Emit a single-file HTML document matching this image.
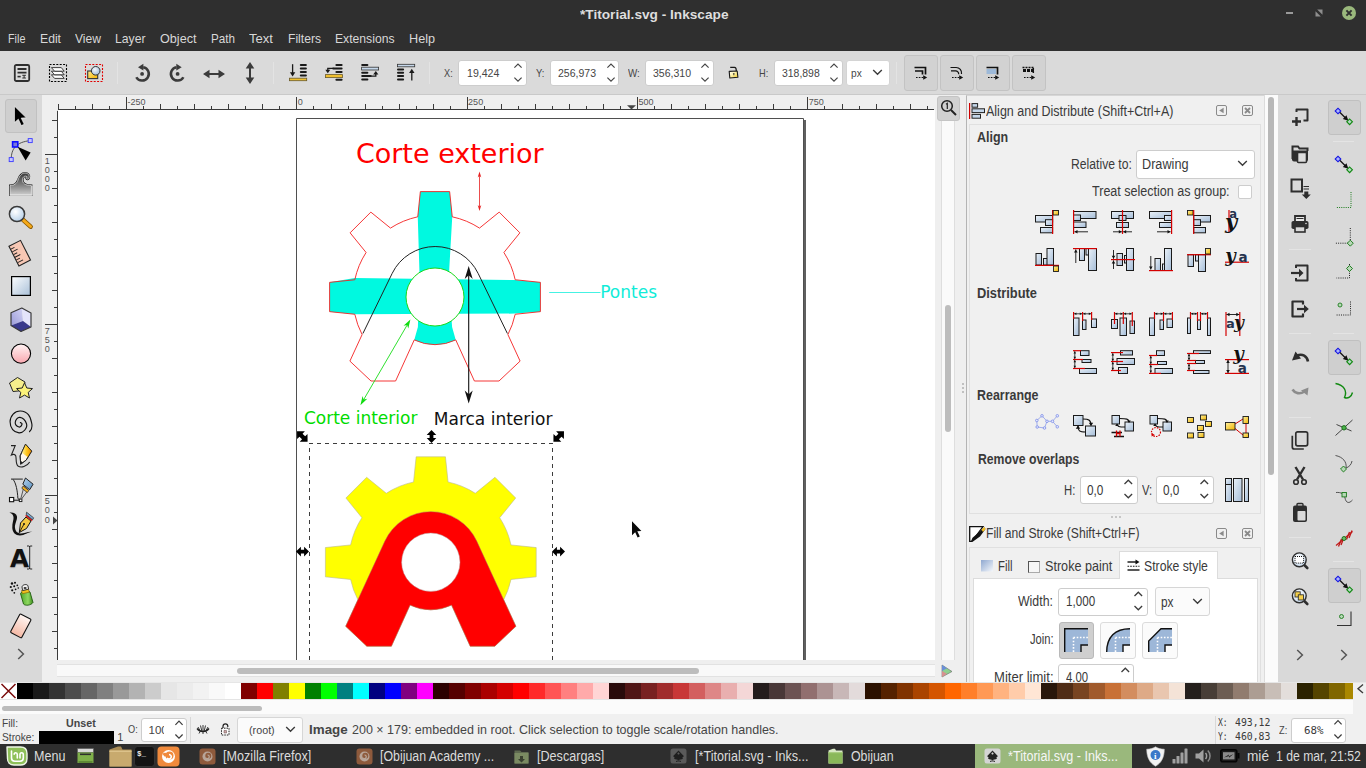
<!DOCTYPE html>
<html><head><meta charset="utf-8"><title>*Titorial.svg - Inkscape</title>
<style>
html,body{margin:0;padding:0;}
body{width:1366px;height:768px;overflow:hidden;position:relative;background:#d9d9d9;font-family:"Liberation Sans",sans-serif;}
body div,body svg,.t{position:absolute;box-sizing:border-box;}
.t{white-space:nowrap;display:block;}
svg{overflow:visible;}
</style></head><body>
<div style="left:0px;top:0px;width:1366px;height:51px;background:#2f2f2f;"></div>
<span class="t" style="left:580.0px;top:7px;font-size:13px;line-height:15px;color:#dedede;font-weight:bold;transform:scaleX(1.0504);transform-origin:0 0;">*Titorial.svg - Inkscape</span>
<div style="left:1286px;top:12px;width:7px;height:2px;background:#9a9a9a;"></div>
<svg style="left:1314px;top:8px;" width="10" height="10" viewBox="0 0 10 10"><path d="M3.2 1.5H8.5V6.8Z M1.5 3.2V8.5H6.8Z" fill="#8e8e8e"/></svg>
<div style="left:1342px;top:6px;width:14px;height:14px;background:#9ab87c;border-radius:7px;"></div>
<svg style="left:1342px;top:6px;" width="14" height="14" viewBox="0 0 14 14"><path d="M4.4 4.4L9.6 9.6M9.6 4.4L4.4 9.6" stroke="#2f2f2f" stroke-width="2"/></svg>
<span class="t" style="left:8.0px;top:31px;font-size:13.5px;line-height:15px;color:#d8d8d8;transform:scaleX(0.8000);transform-origin:0 0;">File</span>
<span class="t" style="left:40.0px;top:31px;font-size:13.5px;line-height:15px;color:#d8d8d8;transform:scaleX(0.9026);transform-origin:0 0;">Edit</span>
<span class="t" style="left:75.0px;top:31px;font-size:13.5px;line-height:15px;color:#d8d8d8;transform:scaleX(0.8946);transform-origin:0 0;">View</span>
<span class="t" style="left:115.0px;top:31px;font-size:13.5px;line-height:15px;color:#d8d8d8;transform:scaleX(0.9033);transform-origin:0 0;">Layer</span>
<span class="t" style="left:160.0px;top:31px;font-size:13.5px;line-height:15px;color:#d8d8d8;transform:scaleX(0.9355);transform-origin:0 0;">Object</span>
<span class="t" style="left:210.5px;top:31px;font-size:13.5px;line-height:15px;color:#d8d8d8;transform:scaleX(0.8644);transform-origin:0 0;">Path</span>
<span class="t" style="left:249.0px;top:31px;font-size:13.5px;line-height:15px;color:#d8d8d8;transform:scaleX(0.9691);transform-origin:0 0;">Text</span>
<span class="t" style="left:287.5px;top:31px;font-size:13.5px;line-height:15px;color:#d8d8d8;transform:scaleX(0.8980);transform-origin:0 0;">Filters</span>
<span class="t" style="left:335.0px;top:31px;font-size:13.5px;line-height:15px;color:#d8d8d8;transform:scaleX(0.9011);transform-origin:0 0;">Extensions</span>
<span class="t" style="left:409.0px;top:31px;font-size:13.5px;line-height:15px;color:#d8d8d8;transform:scaleX(0.9364);transform-origin:0 0;">Help</span>
<div style="left:0px;top:51px;width:1366px;height:44px;background:#dadada;"></div>
<div style="left:0px;top:94px;width:1366px;height:1px;background:#c9c9c9;"></div>
<svg style="left:13px;top:64px;" width="18" height="18" viewBox="0 0 18 18"><rect x="1.8" y="1" width="14.4" height="16" rx="1.5" fill="none" stroke="#2e2e2e" stroke-width="1.8"/><path d="M4.5 5h9M4.5 8.6h9" stroke="#2e2e2e" stroke-width="1.8"/><path d="M4.5 12.6h3.2" stroke="#2e2e2e" stroke-width="1.6"/><path d="M9.3 11.3h3.6M9.3 14h3.6M11.1 11.3v2.7" stroke="#2e2e2e" stroke-width="1"/></svg>
<svg style="left:49px;top:64px;" width="18" height="18" viewBox="0 0 18 18"><rect x=".5" y=".5" width="17" height="17" fill="none" stroke="#000" stroke-width="1.100" stroke-dasharray="2 1.400"/><path d="M2.400 10.8H12.300L15.200 14.4H5.600Z" fill="#fff" stroke="#2a2a2a" stroke-width=".9" stroke-linejoin="round"/><path d="M2.400 7.2H12.300L15.200 10.8H5.600Z" fill="#fff" stroke="#2a2a2a" stroke-width=".9" stroke-linejoin="round"/><path d="M2.400 3.6H12.300L15.200 7.2H5.600Z" fill="#fff" stroke="#2a2a2a" stroke-width=".9" stroke-linejoin="round"/></svg>
<svg style="left:85px;top:64px;" width="18" height="18" viewBox="0 0 18 18"><defs><linearGradient id="gFo" x1="0" y1="0" x2="1" y2="1"><stop offset="0" stop-color="#ffe88a"/><stop offset="1" stop-color="#f5b400"/></linearGradient><radialGradient id="gBall" cx=".4" cy=".35" r=".7"><stop offset="0" stop-color="#f4f8fc"/><stop offset="1" stop-color="#9db9d8"/></radialGradient></defs><rect x=".5" y=".5" width="17" height="17" fill="none" stroke="#e00000" stroke-width="1.100" stroke-dasharray="2 1.400"/><rect x="2.700" y="7" width="10" height="7.600" fill="url(#gFo)" stroke="#333" stroke-width="1.100"/><circle cx="10.700" cy="6.800" r="4.300" fill="url(#gBall)" stroke="#333" stroke-width="1"/></svg>
<div style="left:117px;top:62px;width:1px;height:22px;background:#e3e3e3;"></div>
<svg style="left:134px;top:63px;" width="18" height="20" viewBox="0 0 18 20"><path d="M9.200 4.300A6.700 6.700 0 1 1 2.300 14.250" fill="none" stroke="#3b3b3b" stroke-width="2.500"/><path d="M4 4.300L9.400 .7V7.600Z" fill="#3b3b3b"/><circle cx="8.100" cy="10.900" r="1.900" fill="#3b3b3b"/></svg>
<svg style="left:168px;top:63px;" width="18" height="20" viewBox="0 0 18 20"><path d="M8.5 4.300A6.700 6.700 0 1 0 15.4 14.250" fill="none" stroke="#3b3b3b" stroke-width="2.500"/><path d="M13.7 4.300L8.3 .7V7.600Z" fill="#3b3b3b"/><circle cx="9.6" cy="10.900" r="1.900" fill="#3b3b3b"/></svg>
<svg style="left:203px;top:68px;" width="22" height="12" viewBox="0 0 22 12"><path d="M0 6L6.500 1.700V5H15.500V1.700L22 6 15.500 10.300V7H6.500V10.300Z" fill="#3b3b3b"/></svg>
<svg style="left:245px;top:62px;" width="10" height="22" viewBox="0 0 10 22"><path d="M5 0L9.300 6.500H6V15.500H9.300L5 22 .7 15.500H4V6.500H.7Z" fill="#3b3b3b"/></svg>
<div style="left:273px;top:62px;width:1px;height:22px;background:#e3e3e3;"></div>
<svg style="left:289px;top:64px;" width="18" height="18" viewBox="0 0 18 18"><path d="M11.8 0.9H16.9" stroke="#1a1a1a" stroke-width="2" stroke-linecap="round"/><path d="M11.8 4.4H16.9" stroke="#1a1a1a" stroke-width="2" stroke-linecap="round"/><path d="M11.8 8H16.9" stroke="#1a1a1a" stroke-width="2" stroke-linecap="round"/><path d="M11.8 11.6H16.9" stroke="#1a1a1a" stroke-width="2" stroke-linecap="round"/><path d="M3.600 .2V9" stroke="#1a1a1a" stroke-width="1.300"/><path d="M.9 8.300H6.300L3.600 12.500Z" fill="#1a1a1a"/><rect x=".5" y="14.200" width="17.200" height="2.500" fill="#f0c030" stroke="#6a5a2a" stroke-width=".8"/></svg>
<svg style="left:325px;top:64px;" width="18" height="18" viewBox="0 0 18 18"><path d="M11.4 0.9H16.6" stroke="#1a1a1a" stroke-width="2" stroke-linecap="round"/><path d="M8.2 4.4H16.6" stroke="#1a1a1a" stroke-width="2" stroke-linecap="round"/><path d="M11.4 8H16.6" stroke="#1a1a1a" stroke-width="2" stroke-linecap="round"/><path d="M11.4 15.7H16.6" stroke="#1a1a1a" stroke-width="2" stroke-linecap="round"/><path d="M8.500 4.400H2.800V6.500" stroke="#1a1a1a" stroke-width="1.300" fill="none"/><path d="M.3 5.800H5.300L2.800 9.200Z" fill="#1a1a1a"/><rect x=".5" y="10.600" width="17" height="3" fill="#f0c030" stroke="#6a5a2a" stroke-width=".8"/></svg>
<svg style="left:361px;top:64px;" width="18" height="18" viewBox="0 0 18 18"><path d="M1.2 0.9H6.4" stroke="#1a1a1a" stroke-width="2" stroke-linecap="round"/><path d="M1.2 8.7H6.4" stroke="#1a1a1a" stroke-width="2" stroke-linecap="round"/><path d="M1.2 12.1H9.7" stroke="#1a1a1a" stroke-width="2" stroke-linecap="round"/><path d="M1.2 15.5H6.4" stroke="#1a1a1a" stroke-width="2" stroke-linecap="round"/><rect x=".6" y="3.200" width="17" height="2.800" fill="#c5d7ea" stroke="#333" stroke-width=".8"/><path d="M9.500 12.100H14.800V10" stroke="#1a1a1a" stroke-width="1.300" fill="none"/><path d="M12.200 10.500H17.400L14.800 7Z" fill="#1a1a1a"/></svg>
<svg style="left:397px;top:64px;" width="18" height="18" viewBox="0 0 18 18"><path d="M1 5.5H6.1" stroke="#1a1a1a" stroke-width="2" stroke-linecap="round"/><path d="M1 8.8H6.1" stroke="#1a1a1a" stroke-width="2" stroke-linecap="round"/><path d="M1 12.1H6.1" stroke="#1a1a1a" stroke-width="2" stroke-linecap="round"/><path d="M1 15.5H6.1" stroke="#1a1a1a" stroke-width="2" stroke-linecap="round"/><rect x=".4" y=".3" width="17.300" height="2.500" fill="#c5d7ea" stroke="#333" stroke-width=".8"/><path d="M14.800 16.600V8" stroke="#1a1a1a" stroke-width="1.300"/><path d="M12.100 9H17.500L14.800 4.800Z" fill="#1a1a1a"/></svg>
<div style="left:429px;top:62px;width:1px;height:22px;background:#e3e3e3;"></div>
<span class="t" style="left:444.0px;top:67px;font-size:11.5px;line-height:12px;color:#454545;transform:scaleX(0.8000);transform-origin:0 0;">X:</span>
<div style="left:458px;top:60px;width:68.5px;height:26px;background:#ffffff;border:1px solid #cdcdcd;border-radius:3px;"></div>
<span class="t" style="left:466.6px;top:67px;font-size:11.5px;line-height:12px;color:#454545;transform:scaleX(0.9212);transform-origin:0 0;">19,424</span>
<svg style="left:513.0px;top:62px;" width="10" height="22" viewBox="0 0 10 22"><path d="M1.400 5.700L5 2.100 8.600 5.700M1.400 15.600L5 19.200 8.600 15.600" fill="none" stroke="#444" stroke-width="1.150"/></svg>
<span class="t" style="left:536.0px;top:67px;font-size:11.5px;line-height:12px;color:#454545;transform:scaleX(0.8208);transform-origin:0 0;">Y:</span>
<div style="left:550px;top:60px;width:69px;height:26px;background:#ffffff;border:1px solid #cdcdcd;border-radius:3px;"></div>
<span class="t" style="left:558.2px;top:67px;font-size:11.5px;line-height:12px;color:#454545;transform:scaleX(0.9143);transform-origin:0 0;">256,973</span>
<svg style="left:605.5px;top:62px;" width="10" height="22" viewBox="0 0 10 22"><path d="M1.400 5.700L5 2.100 8.600 5.700M1.400 15.600L5 19.200 8.600 15.600" fill="none" stroke="#444" stroke-width="1.150"/></svg>
<span class="t" style="left:627.7px;top:67px;font-size:11.5px;line-height:12px;color:#454545;transform:scaleX(0.8524);transform-origin:0 0;">W:</span>
<div style="left:645px;top:60px;width:68.5px;height:26px;background:#ffffff;border:1px solid #cdcdcd;border-radius:3px;"></div>
<span class="t" style="left:653.0px;top:67px;font-size:11.5px;line-height:12px;color:#454545;transform:scaleX(0.9143);transform-origin:0 0;">356,310</span>
<svg style="left:700.0px;top:62px;" width="10" height="22" viewBox="0 0 10 22"><path d="M1.400 5.700L5 2.100 8.600 5.700M1.400 15.600L5 19.200 8.600 15.600" fill="none" stroke="#444" stroke-width="1.150"/></svg>
<span class="t" style="left:759.2px;top:67px;font-size:11.5px;line-height:12px;color:#454545;transform:scaleX(0.8000);transform-origin:0 0;">H:</span>
<div style="left:774px;top:60px;width:68.5px;height:26px;background:#ffffff;border:1px solid #cdcdcd;border-radius:3px;"></div>
<span class="t" style="left:782.3px;top:67px;font-size:11.5px;line-height:12px;color:#454545;transform:scaleX(0.9071);transform-origin:0 0;">318,898</span>
<svg style="left:829.0px;top:62px;" width="10" height="22" viewBox="0 0 10 22"><path d="M1.400 5.700L5 2.100 8.600 5.700M1.400 15.600L5 19.200 8.600 15.600" fill="none" stroke="#444" stroke-width="1.150"/></svg>
<svg style="left:727px;top:65px;" width="13" height="14" viewBox="0 0 13 14"><defs><linearGradient id="gLk" x1="0" y1="0" x2="1" y2="1"><stop offset="0" stop-color="#ffffff"/><stop offset=".5" stop-color="#fdf0a0"/><stop offset="1" stop-color="#e8c020"/></linearGradient></defs><path d="M3.200 2.400H7.600C9 2.400 9.300 3.600 9.300 6" fill="none" stroke="#1a1a1a" stroke-width="1.200"/><path d="M2.200 6.400L10.200 6 10.900 12.300 2.800 13Z" fill="url(#gLk)" stroke="#1a1a1a" stroke-width="1.100" stroke-linejoin="round"/><path d="M5.800 8.200h1.800l-.6 2.600z" fill="#222"/></svg>
<div style="left:846px;top:60px;width:43.5px;height:26px;background:#ffffff;border:1px solid #d4d4d4;border-radius:3px;"></div>
<span class="t" style="left:851.3px;top:67px;font-size:11.5px;line-height:12px;color:#454545;transform:scaleX(0.8813);transform-origin:0 0;">px</span>
<svg style="left:872px;top:68px;" width="11" height="9" viewBox="0 0 11 9"><path d="M1.2 2L5.5 6.3 9.8 2" fill="none" stroke="#3c3c3c" stroke-width="1.4"/></svg>
<div style="left:896px;top:62px;width:1px;height:22px;background:#e3e3e3;"></div>
<div style="left:904px;top:55px;width:34px;height:35.5px;background:#d2d2d2;border:1px solid #c3c3c3;border-radius:3px;"></div>
<svg style="left:914px;top:66px;" width="14" height="15" viewBox="0 0 14 15"><path d="M0.5 1.5h11v7M1 5h7.5v3.5" fill="none" stroke="#111" stroke-width="1.7"/><path d="M2 11.5h8" stroke="#111" stroke-width="1.2" stroke-dasharray="1.6 1.2" fill="none"/><path d="M9.2 9.2l4 2.3-4 2.3z" fill="#111"/></svg>
<div style="left:940px;top:55px;width:34px;height:35.5px;background:#d2d2d2;border:1px solid #c3c3c3;border-radius:3px;"></div>
<svg style="left:950px;top:66px;" width="14" height="15" viewBox="0 0 14 15"><path d="M0.5 1.5h5.5a5.5 5.5 0 0 1 5.5 6.5M1 4.8h4.5a3.2 3.2 0 0 1 3.2 3.5" fill="none" stroke="#111" stroke-width="1.2"/><path d="M2 11.5h8" stroke="#111" stroke-width="1.2" stroke-dasharray="1.6 1.2" fill="none"/><path d="M9.2 9.2l4 2.3-4 2.3z" fill="#111"/></svg>
<div style="left:976px;top:55px;width:34px;height:35.5px;background:#d2d2d2;border:1px solid #c3c3c3;border-radius:3px;"></div>
<svg style="left:986px;top:66px;" width="14" height="15" viewBox="0 0 14 15"><rect x="0.5" y="3" width="9.5" height="5" fill="#9db9d8"/><path d="M0.5 1.5h11v7" fill="none" stroke="#111" stroke-width="1.7"/><path d="M2 11.5h8" stroke="#111" stroke-width="1.2" stroke-dasharray="1.6 1.2" fill="none"/><path d="M9.2 9.2l4 2.3-4 2.3z" fill="#111"/></svg>
<div style="left:1012px;top:55px;width:34px;height:35.5px;background:#d2d2d2;border:1px solid #c3c3c3;border-radius:3px;"></div>
<svg style="left:1022px;top:66px;" width="14" height="15" viewBox="0 0 14 15"><path d="M0.5 1.5h11" stroke="#111" stroke-width="1.5" stroke-dasharray="2 1"/><path d="M1 3h3v3h-3zM5 3h3v3h-3zM9 3h3v3h-3z" fill="#111"/><path d="M11.3 2v6" stroke="#111" stroke-width="1.5" stroke-dasharray="2 1"/><path d="M2 11.5h8" stroke="#111" stroke-width="1.2" stroke-dasharray="1.6 1.2" fill="none"/><path d="M9.2 9.2l4 2.3-4 2.3z" fill="#111"/></svg>
<div style="left:0px;top:95px;width:42px;height:587px;background:#d9d9d9;"></div>
<div style="left:5px;top:99px;width:32px;height:34px;background:#cfcfcf;border:1px solid #c1c1c1;border-radius:3px;"></div>
<svg width="0" height="0" style="left:0;top:0"><defs>
<linearGradient id="gRect" x1="0" y1="0" x2="1" y2="1"><stop offset="0" stop-color="#fdfeff"/><stop offset="1" stop-color="#a9c0d8"/></linearGradient>
<linearGradient id="gPink" x1="0" y1="0" x2="0" y2="1"><stop offset="0" stop-color="#fff4f4"/><stop offset="1" stop-color="#f9a8b0"/></linearGradient>
<linearGradient id="gEra" x1="0" y1="0" x2="0" y2="1"><stop offset="0" stop-color="#fff6f2"/><stop offset="1" stop-color="#f4b8a4"/></linearGradient>
<linearGradient id="gWave" x1="0" y1="0" x2="0" y2="1"><stop offset="0" stop-color="#2a2a2a"/><stop offset=".55" stop-color="#6a6a6a"/><stop offset="1" stop-color="#c4c4c4"/></linearGradient>
<radialGradient id="gLens" cx=".4" cy=".35" r=".7"><stop offset="0" stop-color="#ffffff"/><stop offset="1" stop-color="#b5cfe8"/></radialGradient>
<linearGradient id="gCan" x1="0" y1="0" x2="1" y2="0"><stop offset="0" stop-color="#4ea82a"/><stop offset=".6" stop-color="#8fd860"/><stop offset="1" stop-color="#3c8a1e"/></linearGradient>
</defs></svg>
<svg style="left:13px;top:105px;" width="15" height="22" viewBox="0 0 15 22"><path d="M1.5 1.2V17.6L5.3 14.2 8.3 20.6 11.2 19.3 8.2 13.1 13.3 12.8z" fill="#000" stroke="#fff" stroke-width=".6"/></svg>
<svg style="left:8px;top:137px;" width="26" height="26" viewBox="0 0 26 26"><path d="M3.2 22.5C3.2 12 8 5 22.5 3.6" fill="none" stroke="#444" stroke-width=".9"/><rect x="4.600" y="4.800" width="5.200" height="5.200" fill="#7878d8" stroke="#1010ff" stroke-width="1.600"/><rect x="20.2" y="1.6" width="4" height="4" fill="#c8c8ff" stroke="#3a3aff" stroke-width=".9"/><rect x="1.2" y="20.6" width="4" height="4" fill="#c8c8ff" stroke="#3a3aff" stroke-width=".9"/><path d="M9.6 9.8L22.6 15.6 17.6 23.6z" fill="#000"/></svg>
<svg style="left:9px;top:171px;" width="24" height="25" viewBox="0 0 24 25"><defs><linearGradient id="gWv" x1="0" y1="0" x2="0" y2="1"><stop offset="0" stop-color="#3a3a3a"/><stop offset=".5" stop-color="#7a7a7a"/><stop offset="1" stop-color="#cdcdcd"/></linearGradient></defs><path d="M1.100 24V14.500C5 14.500 7.500 13 9 9 10.500 4.500 13 2 16 2 19 2 21 4.500 20 7 19.500 8.300 17.800 8.600 17.200 7.400 16.800 6.300 17.800 5.300 18.300 6 16.500 4.200 13.800 5.500 13.500 8.500 13.200 12 16 14.500 22.400 14.500V24Z" fill="url(#gWv)" stroke="#111" stroke-width="2"/><path d="M1.100 24V14.500C5 14.500 7.500 13 9 9 10.500 4.500 13 2 16 2 19 2 21 4.500 20 7 19.500 8.300 17.800 8.600 17.200 7.400 16.800 6.300 17.800 5.300 18.300 6 16.500 4.200 13.800 5.500 13.500 8.500 13.200 12 16 14.500 22.400 14.500V24Z" fill="url(#gWv)" stroke="#f4f4f4" stroke-width=".7"/><path d="M.6 24.300H23V14.800" fill="none" stroke="#f0f0f0" stroke-width=".9"/></svg>
<svg style="left:7px;top:204px;" width="27" height="27" viewBox="0 0 27 27"><path d="M15.8 15.6L23.600 22.600" stroke="#8a5a00" stroke-width="4.600" stroke-linecap="round"/><path d="M16 15.800L23.500 22.500" stroke="#f5a91a" stroke-width="3" stroke-linecap="round"/><circle cx="10" cy="10" r="7.600" fill="url(#gLens)" stroke="#3a3a3a" stroke-width="1.500"/></svg>
<svg style="left:7px;top:239px;" width="26" height="26" viewBox="0 0 26 26"><g transform="rotate(-27 13 14)"><rect x="6.2" y="3" width="13" height="22" fill="#f7c7b4" stroke="#222" stroke-width="1.100"/><path d="M6.600 6.500h4M6.600 9.500h6M6.600 12.500h4M6.600 15.500h6M6.600 18.500h4M6.600 21.500h6" stroke="#222" stroke-width=".9"/></g></svg>
<svg style="left:11px;top:276px;" width="20" height="20" viewBox="0 0 20 20"><rect x=".6" y=".6" width="18.800" height="18.800" fill="url(#gRect)" stroke="#000" stroke-width="1.200"/></svg>
<svg style="left:0px;top:0px;" width="42" height="340" viewBox="0 0 42 340"><defs><linearGradient id="gBoxL" x1="0" y1="1" x2="1" y2="0"><stop offset="0" stop-color="#9a9ad8"/><stop offset="1" stop-color="#d4d4f4"/></linearGradient></defs><path d="M11 312.700L21.800 308 23 321 11 325.400z" fill="url(#gBoxL)"/><path d="M21.800 308L31 313V327L23 321z" fill="#e4e4fb"/><path d="M11 325.400L23 321 31 327 21 331.500z" fill="#38388c"/><path d="M21.800 308L31 313V327L21 331.500 11 325.400V312.700z" fill="none" stroke="#3a3a3a" stroke-width="1.200" stroke-linejoin="round"/></svg>
<svg style="left:10px;top:343px;" width="22" height="22" viewBox="0 0 22 22"><circle cx="11" cy="10.600" r="9.600" fill="url(#gPink)" stroke="#000" stroke-width="1.100"/></svg>
<svg style="left:8px;top:376px;" width="26" height="24" viewBox="0 0 26 24"><path d="M9.500 1.500L17 6 15 14.500 5 15.500 1.500 7z" fill="#f6ee8c" stroke="#222" stroke-width="1"/><path d="M16.500 6.800l2.300 5.200 5.700.6-4.300 3.800 1.300 5.600-5-2.900-5 2.900 1.300-5.600-4.300-3.800 5.700-.6z" fill="#fbf27a" stroke="#222" stroke-width="1"/></svg>
<svg style="left:0px;top:0px;" width="42" height="440" viewBox="0 0 42 440"><path d="M20.41 422.52 C21.00 423.11 22.30 423.36 22.05 424.16 C21.60 425.58 20.44 427.37 19.00 426.97 C16.92 426.39 15.04 424.43 15.25 422.28 C15.49 419.85 17.51 417.06 19.94 417.36 C23.19 417.77 25.38 420.60 26.50 423.69 C27.34 426.00 26.18 428.35 24.63 430.25 C23.21 431.97 21.22 432.96 19.00 432.83 C16.44 432.68 14.29 431.54 12.67 429.55 C10.83 427.26 10.00 424.75 10.09 421.81 C10.18 418.82 11.07 416.24 13.14 414.08 C15.10 412.03 17.57 410.94 20.41 411.03 C23.54 411.13 26.31 412.19 28.38 414.55 C30.80 417.32 31.12 420.55 31.89 424.16 C32.24 425.82 31.93 427.23 31.42 428.84 C31.06 430.01 30.22 430.64 29.55 431.66" fill="none" stroke="#111" stroke-width="1.150" stroke-linecap="round"/></svg>
<svg style="left:9px;top:443px;" width="25" height="26" viewBox="0 0 25 26"><defs><linearGradient id="gPc" x1="0" y1="0" x2="1" y2="0"><stop offset="0" stop-color="#fff2a0"/><stop offset=".5" stop-color="#ffc81e"/><stop offset="1" stop-color="#f08a00"/></linearGradient></defs><path d="M2 2.600H6.200L2.400 12C4 11 6.200 11 6.800 13 7.600 17 6.500 21 9 23 12 25.200 18 23.500 20.700 19" fill="none" stroke="#222" stroke-width="1.100"/><path d="M11.700 21.200L11.100 12.900 16.500 1.200 22.700 8.100 17.200 17.100Z" fill="#fff8ec" stroke="#222" stroke-width=".9" stroke-linejoin="round"/><path d="M16.500 1.200L22.700 8.100 19 14.200 12.600 9.600Z" fill="url(#gPc)"/><path d="M11.700 21.200L11.500 17.800 14 19.500Z" fill="#222"/><path d="M11.700 21.200L11.100 12.900 16.500 1.200 22.700 8.100 17.200 17.100Z" fill="none" stroke="#222" stroke-width=".9" stroke-linejoin="round"/></svg>
<svg style="left:8px;top:477px;" width="26" height="26" viewBox="0 0 26 26"><defs><linearGradient id="gPn" x1="0" y1="0" x2="1" y2="1"><stop offset="0" stop-color="#b4d4ee"/><stop offset="1" stop-color="#5a8fc0"/></linearGradient></defs><path d="M3 2.100H14.800M5.100 2.400C8 6 9.500 14 9.900 21.500L12 23.200" fill="none" stroke="#222" stroke-width="1"/><path d="M5.800 23.200H11.500" stroke="#111" stroke-width="1"/><rect x="1.500" y="20.500" width="4.200" height="4.200" fill="#fff" stroke="#111" stroke-width="1.100"/><rect x="11.300" y="22" width="2.600" height="2.600" fill="#fff" stroke="#111" stroke-width=".9"/><path d="M16 9.500L20.300 13 13.500 22 12.700 22.400 12.900 21.300Z" fill="#d8d8d8" stroke="#333" stroke-width=".8"/><path d="M15.200 9L20.800 13.500 19.300 15.600 13.800 11.200Z" fill="#f2b01e" stroke="#333" stroke-width=".8"/><path d="M17.500 1L25.100 7.200 21.700 12.700 14.800 7.200Z" fill="url(#gPn)" stroke="#222" stroke-width="1" stroke-linejoin="round"/></svg>
<svg style="left:8px;top:510px;" width="26" height="28" viewBox="0 0 26 28"><path d="M1.400 2.500C5 2 8.500 3.200 9 6.500 9.500 10 6.500 14 7 18 7.300 21 9 23 12 23.500 15 24 20 21 24.400 21.800 20 22 16.500 25.500 12 25.500 7.500 25.500 4.500 22.500 4.300 18 4 13 6 9.500 5.500 7 5 4.500 3.500 3.200 1.400 2.500Z" fill="#111"/><path d="M11.300 22.500L12.500 13 18 7 23 11 18.500 18.500Z" fill="#f5c840" stroke="#111" stroke-width="1" stroke-linejoin="round"/><path d="M11.300 22.500L15.800 14.500" stroke="#111" stroke-width=".9"/><circle cx="16" cy="14" r="1" fill="#111"/><path d="M17.200 6L23.800 11.200 24.600 9.800 18.200 4.700Z" fill="#e01818"/><path d="M18.600 2.200L25.600 7.800 24.600 9.800 18.200 4.700Z" fill="#7aa8d4" stroke="#222" stroke-width=".7"/></svg>
<span class="t" style="left:9.9px;top:544px;font-size:24.5px;line-height:29px;color:#111;font-weight:bold;font-family:'DejaVu Sans',sans-serif;text-shadow:0 1px 1px #999;">A</span>
<svg style="left:26px;top:545px;" width="7" height="26" viewBox="0 0 7 26"><path d="M1 1h1.800c.7 0 .9.500.9 1v21c0 .5-.2 1-.9 1H1M6.200 1H4.600c-.7 0-.9.500-.9 1M6.200 24H4.600c-.7 0-.9-.5-.9-1" fill="none" stroke="#111" stroke-width=".9"/></svg>
<svg style="left:9px;top:581px;" width="26" height="26" viewBox="0 0 26 26"><g fill="#111"><circle cx="3" cy="2.500" r="1.200"/><circle cx="6" cy="1.800" r="1"/><circle cx="1.800" cy="6" r="1.100"/><circle cx="5.200" cy="5.200" r="1"/><circle cx="8.300" cy="4.300" r=".9"/><circle cx="3.200" cy="9.300" r="1.100"/><circle cx="6.600" cy="8.300" r=".9"/><circle cx="9.300" cy="7" r=".8"/><circle cx="5.300" cy="11.800" r=".9"/></g><path d="M11.500 12.500c1-2.500 7-3.500 9.500-1.500l3 10.500c-2 3-8 3.500-9.500 1.500z" fill="url(#gCan)" stroke="#1e5a0e" stroke-width=".9"/><path d="M12.500 9.500l7-1.500.8 3.200-7 1.500z" fill="#f0c020" stroke="#7a5a00" stroke-width=".6"/><path d="M13 6c0-2.500 5.500-3.500 6-1l.6 3.200-6 1.300z" fill="#f4f4f4" stroke="#222" stroke-width=".9"/><rect x="14.800" y="6" width="2.600" height="2" fill="#444"/></svg>
<svg style="left:9px;top:612px;" width="24" height="28" viewBox="0 0 24 28"><g transform="rotate(28 12 14)"><rect x="5.500" y="3.500" width="12.500" height="21" rx="1" fill="url(#gEra)" stroke="#111" stroke-width="1.100"/></g></svg>
<svg style="left:16px;top:647px;" width="10" height="14" viewBox="0 0 10 14"><path d="M2.200 2L7.400 7 2.200 12" fill="none" stroke="#555" stroke-width="1.500"/></svg>
<div style="left:42px;top:95px;width:895px;height:15px;background:#efefef;"></div>
<div style="left:42px;top:95px;width:15px;height:587px;background:#efefef;"></div>
<div style="left:58px;top:110px;width:877px;height:550px;background:#ffffff;"></div>
<svg style="left:0px;top:0px;" width="1366" height="768" viewBox="0 0 1366 768"><defs><clipPath id="cv"><rect x="58" y="110" width="877" height="550"/></clipPath></defs><path d="M58 109.500H934" stroke="#3a3a3a" stroke-width="1"/><path d="M57.500 111V660" stroke="#3a3a3a" stroke-width="1"/><path d="M58.5 104V110" stroke="#3a3a3a" stroke-width="1"/><path d="M75.5 106V110" stroke="#3a3a3a" stroke-width="1"/><path d="M92.5 104V110" stroke="#3a3a3a" stroke-width="1"/><path d="M109.5 106V110" stroke="#3a3a3a" stroke-width="1"/><path d="M126.5 97V110" stroke="#3a3a3a" stroke-width="1"/><path d="M143.5 106V110" stroke="#3a3a3a" stroke-width="1"/><path d="M160.5 104V110" stroke="#3a3a3a" stroke-width="1"/><path d="M177.5 106V110" stroke="#3a3a3a" stroke-width="1"/><path d="M194.5 104V110" stroke="#3a3a3a" stroke-width="1"/><path d="M211.5 106V110" stroke="#3a3a3a" stroke-width="1"/><path d="M228.5 104V110" stroke="#3a3a3a" stroke-width="1"/><path d="M245.5 106V110" stroke="#3a3a3a" stroke-width="1"/><path d="M262.5 104V110" stroke="#3a3a3a" stroke-width="1"/><path d="M279.5 106V110" stroke="#3a3a3a" stroke-width="1"/><path d="M296.5 97V110" stroke="#3a3a3a" stroke-width="1"/><path d="M313.5 106V110" stroke="#3a3a3a" stroke-width="1"/><path d="M331.5 104V110" stroke="#3a3a3a" stroke-width="1"/><path d="M348.5 106V110" stroke="#3a3a3a" stroke-width="1"/><path d="M365.5 104V110" stroke="#3a3a3a" stroke-width="1"/><path d="M382.5 106V110" stroke="#3a3a3a" stroke-width="1"/><path d="M399.5 104V110" stroke="#3a3a3a" stroke-width="1"/><path d="M416.5 106V110" stroke="#3a3a3a" stroke-width="1"/><path d="M433.5 104V110" stroke="#3a3a3a" stroke-width="1"/><path d="M450.5 106V110" stroke="#3a3a3a" stroke-width="1"/><path d="M467.5 97V110" stroke="#3a3a3a" stroke-width="1"/><path d="M484.5 106V110" stroke="#3a3a3a" stroke-width="1"/><path d="M501.5 104V110" stroke="#3a3a3a" stroke-width="1"/><path d="M518.5 106V110" stroke="#3a3a3a" stroke-width="1"/><path d="M535.5 104V110" stroke="#3a3a3a" stroke-width="1"/><path d="M552.5 106V110" stroke="#3a3a3a" stroke-width="1"/><path d="M569.5 104V110" stroke="#3a3a3a" stroke-width="1"/><path d="M586.5 106V110" stroke="#3a3a3a" stroke-width="1"/><path d="M603.5 104V110" stroke="#3a3a3a" stroke-width="1"/><path d="M620.5 106V110" stroke="#3a3a3a" stroke-width="1"/><path d="M637.5 97V110" stroke="#3a3a3a" stroke-width="1"/><path d="M654.5 106V110" stroke="#3a3a3a" stroke-width="1"/><path d="M671.5 104V110" stroke="#3a3a3a" stroke-width="1"/><path d="M688.5 106V110" stroke="#3a3a3a" stroke-width="1"/><path d="M705.5 104V110" stroke="#3a3a3a" stroke-width="1"/><path d="M722.5 106V110" stroke="#3a3a3a" stroke-width="1"/><path d="M739.5 104V110" stroke="#3a3a3a" stroke-width="1"/><path d="M756.5 106V110" stroke="#3a3a3a" stroke-width="1"/><path d="M773.5 104V110" stroke="#3a3a3a" stroke-width="1"/><path d="M790.5 106V110" stroke="#3a3a3a" stroke-width="1"/><path d="M807.5 97V110" stroke="#3a3a3a" stroke-width="1"/><path d="M824.5 106V110" stroke="#3a3a3a" stroke-width="1"/><path d="M842.5 104V110" stroke="#3a3a3a" stroke-width="1"/><path d="M859.5 106V110" stroke="#3a3a3a" stroke-width="1"/><path d="M876.5 104V110" stroke="#3a3a3a" stroke-width="1"/><path d="M893.5 106V110" stroke="#3a3a3a" stroke-width="1"/><path d="M910.5 104V110" stroke="#3a3a3a" stroke-width="1"/><path d="M927.5 106V110" stroke="#3a3a3a" stroke-width="1"/><path d="M52 120.5H58" stroke="#3a3a3a" stroke-width="1"/><path d="M54 137.5H58" stroke="#3a3a3a" stroke-width="1"/><path d="M45 154.5H58" stroke="#3a3a3a" stroke-width="1"/><path d="M54 171.5H58" stroke="#3a3a3a" stroke-width="1"/><path d="M52 188.5H58" stroke="#3a3a3a" stroke-width="1"/><path d="M54 205.5H58" stroke="#3a3a3a" stroke-width="1"/><path d="M52 222.5H58" stroke="#3a3a3a" stroke-width="1"/><path d="M54 239.5H58" stroke="#3a3a3a" stroke-width="1"/><path d="M52 256.5H58" stroke="#3a3a3a" stroke-width="1"/><path d="M54 273.5H58" stroke="#3a3a3a" stroke-width="1"/><path d="M52 290.5H58" stroke="#3a3a3a" stroke-width="1"/><path d="M54 307.5H58" stroke="#3a3a3a" stroke-width="1"/><path d="M45 324.5H58" stroke="#3a3a3a" stroke-width="1"/><path d="M54 341.5H58" stroke="#3a3a3a" stroke-width="1"/><path d="M52 358.5H58" stroke="#3a3a3a" stroke-width="1"/><path d="M54 375.5H58" stroke="#3a3a3a" stroke-width="1"/><path d="M52 392.5H58" stroke="#3a3a3a" stroke-width="1"/><path d="M54 409.5H58" stroke="#3a3a3a" stroke-width="1"/><path d="M52 426.5H58" stroke="#3a3a3a" stroke-width="1"/><path d="M54 443.5H58" stroke="#3a3a3a" stroke-width="1"/><path d="M52 460.5H58" stroke="#3a3a3a" stroke-width="1"/><path d="M54 478.5H58" stroke="#3a3a3a" stroke-width="1"/><path d="M45 495.5H58" stroke="#3a3a3a" stroke-width="1"/><path d="M54 512.5H58" stroke="#3a3a3a" stroke-width="1"/><path d="M52 529.5H58" stroke="#3a3a3a" stroke-width="1"/><path d="M54 546.5H58" stroke="#3a3a3a" stroke-width="1"/><path d="M52 563.5H58" stroke="#3a3a3a" stroke-width="1"/><path d="M54 580.5H58" stroke="#3a3a3a" stroke-width="1"/><path d="M52 597.5H58" stroke="#3a3a3a" stroke-width="1"/><path d="M54 614.5H58" stroke="#3a3a3a" stroke-width="1"/><path d="M52 631.5H58" stroke="#3a3a3a" stroke-width="1"/><path d="M54 648.5H58" stroke="#3a3a3a" stroke-width="1"/><g font-family="Liberation Sans,sans-serif"><text transform="translate(127.5,105) scale(.93,1)" font-size="9.700" fill="#555">-250</text><text transform="translate(297.8,105) scale(.93,1)" font-size="9.700" fill="#555">0</text><text transform="translate(468.1,105) scale(.93,1)" font-size="9.700" fill="#555">250</text><text transform="translate(638.5,105) scale(.93,1)" font-size="9.700" fill="#555">500</text><text transform="translate(808.8,105) scale(.93,1)" font-size="9.700" fill="#555">750</text><text transform="translate(44.7,163.5) scale(.93,1)" font-size="9.700" fill="#555">1</text><text transform="translate(44.7,172.6) scale(.93,1)" font-size="9.700" fill="#555">0</text><text transform="translate(44.7,181.7) scale(.93,1)" font-size="9.700" fill="#555">0</text><text transform="translate(44.7,190.8) scale(.93,1)" font-size="9.700" fill="#555">0</text><text transform="translate(44.7,333.5) scale(.93,1)" font-size="9.700" fill="#555">7</text><text transform="translate(44.7,342.6) scale(.93,1)" font-size="9.700" fill="#555">5</text><text transform="translate(44.7,351.7) scale(.93,1)" font-size="9.700" fill="#555">0</text><text transform="translate(44.7,504.3) scale(.93,1)" font-size="9.700" fill="#555">5</text><text transform="translate(44.7,513.4) scale(.93,1)" font-size="9.700" fill="#555">0</text><text transform="translate(44.7,522.5) scale(.93,1)" font-size="9.700" fill="#555">0</text></g><path d="M627 105.300h9l-4.500 4.200z" fill="#444"/><path d="M53 516.500v8l4.500-4z" fill="#444"/><g clip-path="url(#cv)"><path d="M296.500 660V118.500H803.500V660" fill="none" stroke="#4f4f4f" stroke-width="1"/><rect x="804" y="120" width="2" height="540" fill="#606060"/><g transform="translate(435,297)"><path d="M-105.40 14.65 L-105.40 -14.65 L-80.2 -18.9 L80.2 -16.9 L105.40 -14.65 L105.40 14.65 L80.2 16.6 L-80.2 17.3Z" fill="#00f9e0"/><path d="M-14.65 -105.4 L14.65 -105.4 L17.25 -80.2 L14.2 -27 L14.8 0 L17.1 30 L20.75 42.92 A47.7 47.7 0 0 1 -20.75 42.92 L-17.1 30 L-16.2 0 L-15.6 -27 L-17.25 -80.2Z" fill="#00f9e0"/><path d="M-72.90 37.60 A82 82 0 0 1 -80.20 17.25 L-105.40 14.65 L-105.40 -14.65 L-80.20 -17.25 A82 82 0 0 1 -68.91 -44.51 L-84.89 -64.17 L-64.17 -84.89 L-44.51 -68.91 A82 82 0 0 1 -17.25 -80.20 L-14.65 -105.40 L14.65 -105.40 L17.25 -80.20 A82 82 0 0 1 44.51 -68.91 L64.17 -84.89 L84.89 -64.17 L68.91 -44.51 A82 82 0 0 1 80.20 -17.25 L105.40 -14.65 L105.40 14.65 L80.20 17.25 A82 82 0 0 1 72.90 37.60 L85.1 64.1 L64 84 L39.4 84 L20.75 42.92 A47.7 47.7 0 0 1 -20.75 42.92 L-39.4 84 L-64 84 L-85.1 64.1 Z" fill="none" stroke="#f42020" stroke-width=".9" stroke-linejoin="miter"/><circle cx="0" cy="0" r="29" fill="#fff" stroke="#18d818" stroke-width="1"/><path d="M-72.100 36.500L-42.800 -23.650A47.800 47.800 0 0 1 43.100 -23.650L72.400 36.500" fill="none" stroke="#222" stroke-width="1"/></g><path d="M479.500 174V208" stroke="#e62020" stroke-width=".8"/><path transform="translate(479.5,171.4) rotate(-90)" d="M0 0L-6 1.8L-4.32 0L-6 -1.8Z" fill="#e62020"/><path transform="translate(479.5,211) rotate(90)" d="M0 0L-6 1.8L-4.32 0L-6 -1.8Z" fill="#e62020"/><path d="M468.700 272V398" stroke="#111" stroke-width="1.100"/><path transform="translate(468.7,266) rotate(-90)" d="M0 0L-13 4.0L-9.36 0L-13 -4.0Z" fill="#111"/><path transform="translate(468.7,403.5) rotate(90)" d="M0 0L-13 4.0L-9.36 0L-13 -4.0Z" fill="#111"/><path d="M408.500 322.700L362.300 402" stroke="#19dc19" stroke-width=".9"/><path transform="translate(410.4,319.4) rotate(-59.76848126611731)" d="M0 0L-9 2.75L-6.4799999999999995 0L-9 -2.75Z" fill="#10dc10"/><path transform="translate(360.4,405.2) rotate(120.2315187338827)" d="M0 0L-9 2.75L-6.4799999999999995 0L-9 -2.75Z" fill="#10dc10"/><path d="M549.200 292.500H600.500" stroke="#30f0e0" stroke-width=".9"/><g font-family="DejaVu Sans,sans-serif"><text x="355.900" y="162.500" font-size="27" fill="#ff0000">Corte exterior</text><text x="303.900" y="424" font-size="17" fill="#00dc00">Corte interior</text><text x="433.800" y="425.300" font-size="17" fill="#111">Marca interior</text><text x="600.200" y="297.800" font-size="17" fill="#10ecd8">Pontes</text></g><g transform="translate(430.800,562.200)"><path d="M-72.90 37.60 A82 82 0 0 1 -80.20 17.25 L-105.40 14.65 L-105.40 -14.65 L-80.20 -17.25 A82 82 0 0 1 -68.91 -44.51 L-84.89 -64.17 L-64.17 -84.89 L-44.51 -68.91 A82 82 0 0 1 -17.25 -80.20 L-14.65 -105.40 L14.65 -105.40 L17.25 -80.20 A82 82 0 0 1 44.51 -68.91 L64.17 -84.89 L84.89 -64.17 L68.91 -44.51 A82 82 0 0 1 80.20 -17.25 L105.40 -14.65 L105.40 14.65 L80.20 17.25 A82 82 0 0 1 72.90 37.60 L85.1 64.1 L64 84 L39.4 84 L20.75 42.92 A47.7 47.7 0 0 1 -20.75 42.92 L-39.4 84 L-64 84 L-85.1 64.1 Z" fill="#ffff00" stroke="#b8b890" stroke-width=".6"/><path d="M-45.90 -21.10 A50.5 50.5 0 0 1 45.90 -21.10 L85.1 64.1 L64 84 L39.4 84 L20.75 42.92 A47.7 47.7 0 0 1 -20.75 42.92 L-39.4 84 L-64 84 L-85.1 64.1Z" fill="#ff0000" stroke="#b06060" stroke-width=".5"/><circle cx="0" cy="0" r="29.200" fill="#fff" stroke="#b89090" stroke-width=".5"/></g><path d="M309 443.500H553" fill="none" stroke="#3c3c3c" stroke-width="1" stroke-dasharray="4 4"/><path d="M309.500 444V660M552.500 444V660" fill="none" stroke="#3c3c3c" stroke-width="1" stroke-dasharray="4 4" stroke-dashoffset="4"/><path transform="translate(302.3,436.5) rotate(45) scale(1.15)" d="M-6.500 0L-1.600 -4.800V-1.900H1.600V-4.800L6.500 0 1.600 4.800V1.900H-1.600V4.800Z" fill="#000"/><path transform="translate(431.5,436.5) rotate(90) scale(1)" d="M-6.500 0L-1.600 -4.800V-1.900H1.600V-4.800L6.500 0 1.600 4.800V1.900H-1.600V4.800Z" fill="#000"/><path transform="translate(558.7,436.5) rotate(-45) scale(1.15)" d="M-6.500 0L-1.600 -4.800V-1.900H1.600V-4.800L6.500 0 1.600 4.800V1.900H-1.600V4.800Z" fill="#000"/><path transform="translate(302.5,551.6) rotate(0) scale(1)" d="M-6.500 0L-1.600 -4.800V-1.900H1.600V-4.800L6.500 0 1.600 4.800V1.900H-1.600V4.800Z" fill="#000"/><path transform="translate(558.5,551.6) rotate(0) scale(1)" d="M-6.500 0L-1.600 -4.800V-1.900H1.600V-4.800L6.500 0 1.600 4.800V1.900H-1.600V4.800Z" fill="#000"/></g><path d="M632 521.300V535.200L635.200 532.300 637.600 537.500 639.800 536.500 637.300 531.300 641.400 531Z" fill="#0a0a0a" stroke="#fff" stroke-width="1.300" stroke-linejoin="round" paint-order="stroke"/></svg>
<div style="left:57px;top:660px;width:878px;height:22px;background:#efefef;"></div>
<div style="left:57px;top:664px;width:878px;height:13px;background:#f9f9f9;border-top:1px solid #e2e2e2;border-bottom:1px solid #e2e2e2;"></div>
<div style="left:237px;top:667.5px;width:462px;height:6px;background:#bdbdbd;border-radius:3px;"></div>
<div style="left:935px;top:95px;width:31px;height:587px;background:#efefef;"></div>
<div style="left:936.5px;top:95.5px;width:23.5px;height:25px;background:#d1d1d1;border:1px solid #c4c4c4;border-radius:3px;"></div>
<svg style="left:940px;top:99px;" width="18" height="18" viewBox="0 0 18 18"><circle cx="7" cy="7" r="5.300" fill="none" stroke="#222" stroke-width="1.500"/><path d="M11 11L16 16" stroke="#222" stroke-width="2"/><path d="M6 5.200L7.300 4.300V10" stroke="#222" stroke-width="1.200" fill="none"/></svg>
<div style="left:941px;top:121px;width:14px;height:539px;background:#fafafa;border-left:1px solid #dedede;border-right:1px solid #dedede;"></div>
<div style="left:945px;top:305px;width:6px;height:127px;background:#bdbdbd;border-radius:3px;"></div>
<svg style="left:941px;top:664px;" width="12" height="14" viewBox="0 0 12 14"><path d="M1 1L11 7.500 1 13Z" fill="#8fd08f" stroke="#666" stroke-width=".6"/><path d="M1 1L6 4.200 1 7Z" fill="#6a8fd8"/><path d="M1 7L6 9.800 1 13Z" fill="#d88f8f"/></svg>
<div style="left:966px;top:95px;width:298px;height:587px;background:#f0f0f0;border-left:1px solid #b4b4b4;border-top:1px solid #d6d6d6;"></div>
<svg style="left:969px;top:103px;" width="17" height="16" viewBox="0 0 17 16"><path d="M.6 0V16" stroke="#d00000" stroke-width="1.200"/><rect x="3" y=".6" width="5.600" height="3.600" fill="#c5d7ea" stroke="#222" stroke-width="1"/><rect x="3" y="5.800" width="12.500" height="3.800" fill="#c5d7ea" stroke="#222" stroke-width="1"/><rect x="3" y="11.400" width="8.500" height="3.800" fill="#c5d7ea" stroke="#222" stroke-width="1"/></svg>
<span class="t" style="left:986.2px;top:103px;font-size:14px;line-height:16px;color:#3a3a3a;transform:scaleX(0.8920);transform-origin:0 0;">Align and Distribute (Shift+Ctrl+A)</span>
<div style="left:1216px;top:105px;width:11px;height:11px;border:1px solid #8a8a8a;border-radius:2px;"></div>
<svg style="left:1216px;top:105px;" width="11" height="11" viewBox="0 0 11 11"><path d="M7.600 2.800V8.200L3.200 5.500Z" fill="#8a8a8a"/></svg>
<div style="left:1242px;top:105px;width:11px;height:11px;border:1px solid #8a8a8a;border-radius:2px;"></div>
<svg style="left:1242px;top:105px;" width="11" height="11" viewBox="0 0 11 11"><path d="M3 3L8 8M8 3L3 8" stroke="#8a8a8a" stroke-width="1.800"/></svg>
<div style="left:969px;top:124px;width:292px;height:390px;border:1px solid #e0e0e0;"></div>
<span class="t" style="left:977.3px;top:129px;font-size:14px;line-height:16px;color:#3a3a3a;font-weight:bold;transform:scaleX(0.8914);transform-origin:0 0;">Align</span>
<span class="t" style="left:1071.3px;top:156px;font-size:14px;line-height:16px;color:#3a3a3a;transform:scaleX(0.8696);transform-origin:0 0;">Relative to:</span>
<div style="left:1136px;top:149.5px;width:119px;height:29.5px;background:#ffffff;border:1px solid #cdcdcd;border-radius:3px;"></div>
<span class="t" style="left:1142.4px;top:156px;font-size:14px;line-height:16px;color:#3a3a3a;transform:scaleX(0.9054);transform-origin:0 0;">Drawing</span>
<svg style="left:1237px;top:159px;" width="11" height="9" viewBox="0 0 11 9"><path d="M1.200 2L5.500 6.300 9.800 2" fill="none" stroke="#3c3c3c" stroke-width="1.400"/></svg>
<span class="t" style="left:1092.3px;top:183px;font-size:14px;line-height:16px;color:#3a3a3a;transform:scaleX(0.8961);transform-origin:0 0;">Treat selection as group:</span>
<div style="left:1238px;top:185px;width:14px;height:14px;background:#ffffff;border:1px solid #cdcdcd;border-radius:2px;"></div>
<svg width="0" height="0" style="left:0;top:0"><defs><linearGradient id="gB" x1="0" y1="0" x2="1" y2="1"><stop offset="0" stop-color="#eaf1f8"/><stop offset="1" stop-color="#a5bdd8"/></linearGradient><linearGradient id="gY" x1="0" y1="0" x2="1" y2="1"><stop offset="0" stop-color="#fff0a0"/><stop offset="1" stop-color="#f0b400"/></linearGradient></defs></svg>
<svg style="left:1035px;top:210px;" width="24" height="24" viewBox="0 0 24 24"><rect x="0.5" y="5.5" width="17.1" height="6.5" fill="url(#gB)" stroke="#1a1a1a" stroke-width="1"/><rect x="10.5" y="9.7" width="7.100000000000001" height="5.800000000000001" fill="url(#gB)" stroke="#1a1a1a" stroke-width="1"/><rect x="5.5" y="17.5" width="12.100000000000001" height="5.300000000000001" fill="url(#gB)" stroke="#1a1a1a" stroke-width="1"/><path d="M17.6 0V24" stroke="#d40000" stroke-width="1.2"/><rect x="18.2" y="0.5" width="5.300000000000001" height="4.5" fill="url(#gY)" stroke="#1a1a1a" stroke-width=".9"/></svg>
<svg style="left:1073px;top:210px;" width="24" height="24" viewBox="0 0 24 24"><rect x="0.5" y="1.5" width="22.5" height="7.0" fill="url(#gB)" stroke="#1a1a1a" stroke-width="1"/><rect x="0.5" y="5" width="7.0" height="5.5" fill="url(#gB)" stroke="#1a1a1a" stroke-width="1"/><rect x="0.5" y="12" width="12.5" height="5.5" fill="url(#gB)" stroke="#1a1a1a" stroke-width="1"/><path d="M0.6 0V24" stroke="#d40000" stroke-width="1.2"/><path d="M1.5 21.8H15" stroke="#111" stroke-width=".9"/><path d="M1.5 21.8l3 -1.800v3.600z" fill="#111"/></svg>
<svg style="left:1111px;top:210px;" width="24" height="24" viewBox="0 0 24 24"><rect x="0.5" y="1.5" width="22.0" height="7.0" fill="url(#gB)" stroke="#1a1a1a" stroke-width="1"/><rect x="8" y="5.5" width="7" height="5.0" fill="url(#gB)" stroke="#1a1a1a" stroke-width="1"/><rect x="5.5" y="12.5" width="12.0" height="5.0" fill="url(#gB)" stroke="#1a1a1a" stroke-width="1"/><path d="M11.5 0V24" stroke="#d40000" stroke-width="1.2"/><path d="M2 21.8H10.8" stroke="#111" stroke-width=".9"/><path d="M10.8 21.8l-3 -1.800v3.600z" fill="#111"/><path d="M12.2 21.8H21" stroke="#111" stroke-width=".9"/><path d="M12.2 21.8l3 -1.800v3.600z" fill="#111"/></svg>
<svg style="left:1149px;top:210px;" width="24" height="24" viewBox="0 0 24 24"><rect x="0.5" y="1.5" width="22.0" height="7.0" fill="url(#gB)" stroke="#1a1a1a" stroke-width="1"/><rect x="15.5" y="5.5" width="7.0" height="5.0" fill="url(#gB)" stroke="#1a1a1a" stroke-width="1"/><rect x="10.5" y="12.5" width="12.0" height="5.0" fill="url(#gB)" stroke="#1a1a1a" stroke-width="1"/><path d="M22.6 0V24" stroke="#d40000" stroke-width="1.2"/><path d="M8 21.8H21.5" stroke="#111" stroke-width=".9"/><path d="M21.5 21.8l-3 -1.800v3.600z" fill="#111"/></svg>
<svg style="left:1187px;top:210px;" width="24" height="24" viewBox="0 0 24 24"><rect x="0.5" y="0.5" width="5.5" height="4.5" fill="url(#gY)" stroke="#1a1a1a" stroke-width=".9"/><rect x="6.7" y="5.5" width="16.8" height="6.5" fill="url(#gB)" stroke="#1a1a1a" stroke-width="1"/><rect x="6.7" y="9.7" width="6.8" height="5.800000000000001" fill="url(#gB)" stroke="#1a1a1a" stroke-width="1"/><rect x="6.7" y="17.5" width="11.8" height="5.300000000000001" fill="url(#gB)" stroke="#1a1a1a" stroke-width="1"/><path d="M6.7 0V24" stroke="#d40000" stroke-width="1.2"/></svg>
<svg style="left:1225px;top:210px;" width="24" height="24" viewBox="0 0 24 24"><path d="M4 0V22" stroke="#d40000" stroke-width="1.2"/><text x="4.3" y="7.7" font-family="DejaVu Sans,sans-serif" font-weight="bold" font-size="11.5" fill="#26344e">a</text><text x="0" y="19.3" font-family="DejaVu Serif,serif" font-style="italic" font-weight="bold" font-size="21" fill="#111">y</text></svg>
<svg style="left:1035px;top:248px;" width="24" height="24" viewBox="0 0 24 24"><rect x="1" y="5.5" width="5.5" height="11.5" fill="url(#gB)" stroke="#1a1a1a" stroke-width="1"/><rect x="8.5" y="10.5" width="4.5" height="6.5" fill="url(#gB)" stroke="#1a1a1a" stroke-width="1"/><rect x="12" y="0.5" width="6.5" height="16.5" fill="url(#gB)" stroke="#1a1a1a" stroke-width="1"/><path d="M0 17.4H24" stroke="#d40000" stroke-width="1.2"/><rect x="18.5" y="18" width="5.0" height="5.5" fill="url(#gY)" stroke="#1a1a1a" stroke-width=".9"/></svg>
<svg style="left:1073px;top:248px;" width="24" height="24" viewBox="0 0 24 24"><rect x="6.5" y="0.5" width="5.0" height="12.0" fill="url(#gB)" stroke="#1a1a1a" stroke-width="1"/><rect x="13" y="0.5" width="6" height="6.5" fill="url(#gB)" stroke="#1a1a1a" stroke-width="1"/><rect x="15.5" y="0.5" width="8.0" height="22.0" fill="url(#gB)" stroke="#1a1a1a" stroke-width="1"/><path d="M0 0.6H24" stroke="#d40000" stroke-width="1.2"/><path d="M2.8 1.5V15" stroke="#111" stroke-width=".9"/><path d="M2.8 1.5l-1.800 3h3.600z" fill="#111"/></svg>
<svg style="left:1111px;top:248px;" width="24" height="24" viewBox="0 0 24 24"><rect x="6" y="5.5" width="5.5" height="12.0" fill="url(#gB)" stroke="#1a1a1a" stroke-width="1"/><rect x="13.5" y="7.5" width="5.0" height="7.5" fill="url(#gB)" stroke="#1a1a1a" stroke-width="1"/><rect x="15.5" y="0.5" width="7.0" height="22.0" fill="url(#gB)" stroke="#1a1a1a" stroke-width="1"/><path d="M0 11.6H24" stroke="#d40000" stroke-width="1.2"/><path d="M2.5 2V10.8" stroke="#111" stroke-width=".9"/><path d="M2.5 10.8l-1.800 -3h3.600z" fill="#111"/><path d="M2.5 12.4V21" stroke="#111" stroke-width=".9"/><path d="M2.5 12.4l-1.800 3h3.600z" fill="#111"/></svg>
<svg style="left:1149px;top:248px;" width="24" height="24" viewBox="0 0 24 24"><rect x="6" y="10.5" width="5.5" height="12.0" fill="url(#gB)" stroke="#1a1a1a" stroke-width="1"/><rect x="13.5" y="16" width="6.0" height="6.5" fill="url(#gB)" stroke="#1a1a1a" stroke-width="1"/><rect x="15.5" y="0.5" width="7.0" height="22.0" fill="url(#gB)" stroke="#1a1a1a" stroke-width="1"/><path d="M0 22.6H24" stroke="#d40000" stroke-width="1.2"/><path d="M1.8 8V21.5" stroke="#111" stroke-width=".9"/><path d="M1.8 21.5l-1.800 -3h3.600z" fill="#111"/></svg>
<svg style="left:1187px;top:248px;" width="24" height="24" viewBox="0 0 24 24"><rect x="1" y="6.7" width="5.5" height="11.8" fill="url(#gB)" stroke="#1a1a1a" stroke-width="1"/><rect x="8.5" y="6.7" width="5.0" height="6.3" fill="url(#gB)" stroke="#1a1a1a" stroke-width="1"/><rect x="11.5" y="6.7" width="7.0" height="16.8" fill="url(#gB)" stroke="#1a1a1a" stroke-width="1"/><path d="M0 6.7H24" stroke="#d40000" stroke-width="1.2"/><rect x="18.5" y="0.5" width="5.0" height="5.5" fill="url(#gY)" stroke="#1a1a1a" stroke-width=".9"/></svg>
<svg style="left:1225px;top:248px;" width="24" height="24" viewBox="0 0 24 24"><path d="M0 14.2H24" stroke="#d40000" stroke-width="1.2"/><text x="0.3" y="14.2" font-family="DejaVu Serif,serif" font-style="italic" font-weight="bold" font-size="18" fill="#111">y</text><text x="13.6" y="14" font-family="DejaVu Sans,sans-serif" font-weight="bold" font-size="13.5" fill="#26344e">a</text></svg>
<span class="t" style="left:977.3px;top:285px;font-size:14px;line-height:16px;color:#3a3a3a;font-weight:bold;transform:scaleX(0.9182);transform-origin:0 0;">Distribute</span>
<svg style="left:1073px;top:312px;" width="24" height="24" viewBox="0 0 24 24"><rect x="0.5" y="6" width="5.5" height="17.5" fill="url(#gB)" stroke="#1a1a1a" stroke-width="1"/><rect x="9.5" y="8" width="3.5" height="9.5" fill="url(#gB)" stroke="#1a1a1a" stroke-width="1"/><rect x="18.5" y="7" width="5.0" height="8.5" fill="url(#gB)" stroke="#1a1a1a" stroke-width="1"/><path d="M0.6 0V7" stroke="#d40000" stroke-width="1.2"/><path d="M9.6 0V9" stroke="#d40000" stroke-width="1.2"/><path d="M18.6 0V8" stroke="#d40000" stroke-width="1.2"/><path d="M1.2 1.8H9.0" stroke="#111" stroke-width=".8"/><path d="M1.2 1.8l2.200 -1.300v2.600zM9.0 1.8l-2.200 -1.300v2.600z" fill="#111"/><path d="M10.2 1.8H18.0" stroke="#111" stroke-width=".8"/><path d="M10.2 1.8l2.200 -1.300v2.600zM18.0 1.8l-2.200 -1.300v2.600z" fill="#111"/></svg>
<svg style="left:1111px;top:312px;" width="24" height="24" viewBox="0 0 24 24"><rect x="0.5" y="7.5" width="6.0" height="9.0" fill="url(#gB)" stroke="#1a1a1a" stroke-width="1"/><rect x="9" y="6" width="6.5" height="17.5" fill="url(#gB)" stroke="#1a1a1a" stroke-width="1"/><rect x="19" y="9" width="4.5" height="12.5" fill="url(#gB)" stroke="#1a1a1a" stroke-width="1"/><path d="M3.5 0V12" stroke="#d40000" stroke-width="1.2"/><path d="M12.3 0V12" stroke="#d40000" stroke-width="1.2"/><path d="M21.3 0V14" stroke="#d40000" stroke-width="1.2"/><path d="M4.1 1.8H11.700000000000001" stroke="#111" stroke-width=".8"/><path d="M4.1 1.8l2.200 -1.300v2.600zM11.700000000000001 1.8l-2.200 -1.300v2.600z" fill="#111"/><path d="M12.9 1.8H20.7" stroke="#111" stroke-width=".8"/><path d="M12.9 1.8l2.200 -1.300v2.600zM20.7 1.8l-2.200 -1.300v2.600z" fill="#111"/></svg>
<svg style="left:1149px;top:312px;" width="24" height="24" viewBox="0 0 24 24"><rect x="0.5" y="6" width="5.0" height="17.5" fill="url(#gB)" stroke="#1a1a1a" stroke-width="1"/><rect x="11" y="8" width="3.5" height="9.5" fill="url(#gB)" stroke="#1a1a1a" stroke-width="1"/><rect x="18" y="7" width="5.5" height="8.5" fill="url(#gB)" stroke="#1a1a1a" stroke-width="1"/><path d="M5.5 0V7" stroke="#d40000" stroke-width="1.2"/><path d="M14.5 0V9" stroke="#d40000" stroke-width="1.2"/><path d="M23.4 0V8" stroke="#d40000" stroke-width="1.2"/><path d="M6.1 1.8H13.9" stroke="#111" stroke-width=".8"/><path d="M6.1 1.8l2.200 -1.300v2.600zM13.9 1.8l-2.200 -1.300v2.600z" fill="#111"/><path d="M15.1 1.8H22.799999999999997" stroke="#111" stroke-width=".8"/><path d="M15.1 1.8l2.200 -1.300v2.600zM22.799999999999997 1.8l-2.200 -1.300v2.600z" fill="#111"/></svg>
<svg style="left:1187px;top:312px;" width="24" height="24" viewBox="0 0 24 24"><rect x="0.5" y="6" width="3.0" height="15.5" fill="url(#gB)" stroke="#1a1a1a" stroke-width="1"/><rect x="10.5" y="8" width="3.0" height="9.5" fill="url(#gB)" stroke="#1a1a1a" stroke-width="1"/><rect x="20.5" y="6" width="3.0" height="17.5" fill="url(#gB)" stroke="#1a1a1a" stroke-width="1"/><path d="M3.5 0V7" stroke="#d40000" stroke-width="1.2"/><path d="M10.5 0V9" stroke="#d40000" stroke-width="1.2"/><path d="M13.5 0V9" stroke="#d40000" stroke-width="1.2"/><path d="M20.5 0V7" stroke="#d40000" stroke-width="1.2"/><path d="M4.1 1.8H9.9" stroke="#111" stroke-width=".8"/><path d="M4.1 1.8l2.200 -1.300v2.600zM9.9 1.8l-2.200 -1.300v2.600z" fill="#111"/><path d="M14.1 1.8H19.9" stroke="#111" stroke-width=".8"/><path d="M14.1 1.8l2.200 -1.300v2.600zM19.9 1.8l-2.200 -1.300v2.600z" fill="#111"/></svg>
<svg style="left:1225px;top:312px;" width="24" height="24" viewBox="0 0 24 24"><path d="M1 0V24" stroke="#d40000" stroke-width="1.2"/><path d="M14.8 0V24" stroke="#d40000" stroke-width="1.2"/><path d="M1.5 2.5H14.3" stroke="#111" stroke-width=".9"/><path d="M14.3 2.5l-3 -1.800v3.600z" fill="#111"/><path d="M1.5 2.5l3 -1.800v3.600z" fill="#111"/><text x="1" y="16.3" font-family="DejaVu Sans,sans-serif" font-weight="bold" font-size="13" fill="#26344e">a</text><text x="9" y="16.3" font-family="DejaVu Serif,serif" font-style="italic" font-weight="bold" font-size="17" fill="#111">y</text></svg>
<svg style="left:1073px;top:350px;" width="24" height="24" viewBox="0 0 24 24"><rect x="7.5" y="0.7" width="8.5" height="4.8" fill="url(#gB)" stroke="#1a1a1a" stroke-width="1"/><rect x="9" y="9.5" width="9" height="3.0" fill="url(#gB)" stroke="#1a1a1a" stroke-width="1"/><rect x="6.5" y="18.5" width="17.0" height="5.0" fill="url(#gB)" stroke="#1a1a1a" stroke-width="1"/><path d="M0 0.7H8" stroke="#d40000" stroke-width="1.2"/><path d="M0 9.5H10" stroke="#d40000" stroke-width="1.2"/><path d="M0 18.5H12" stroke="#d40000" stroke-width="1.2"/><path d="M1.8 1.2999999999999998V8.9" stroke="#111" stroke-width=".8"/><path d="M1.8 1.2999999999999998l-1.300 2.200h2.600zM1.8 8.9l-1.300 -2.200h2.600z" fill="#111"/><path d="M1.8 10.1V17.9" stroke="#111" stroke-width=".8"/><path d="M1.8 10.1l-1.300 2.200h2.600zM1.8 17.9l-1.300 -2.200h2.600z" fill="#111"/></svg>
<svg style="left:1111px;top:350px;" width="24" height="24" viewBox="0 0 24 24"><rect x="9.5" y="0.7" width="12.0" height="4.3" fill="url(#gB)" stroke="#1a1a1a" stroke-width="1"/><rect x="6" y="8.5" width="17.5" height="6.0" fill="url(#gB)" stroke="#1a1a1a" stroke-width="1"/><rect x="7.5" y="17.5" width="9.0" height="6.0" fill="url(#gB)" stroke="#1a1a1a" stroke-width="1"/><path d="M0 2.6H12" stroke="#d40000" stroke-width="1.2"/><path d="M0 11.5H12" stroke="#d40000" stroke-width="1.2"/><path d="M0 20.5H10" stroke="#d40000" stroke-width="1.2"/><path d="M1.8 3.2V10.9" stroke="#111" stroke-width=".8"/><path d="M1.8 3.2l-1.300 2.200h2.600zM1.8 10.9l-1.300 -2.200h2.600z" fill="#111"/><path d="M1.8 12.1V19.9" stroke="#111" stroke-width=".8"/><path d="M1.8 12.1l-1.300 2.200h2.600zM1.8 19.9l-1.300 -2.200h2.600z" fill="#111"/></svg>
<svg style="left:1149px;top:350px;" width="24" height="24" viewBox="0 0 24 24"><rect x="7.5" y="0.7" width="8.0" height="4.8" fill="url(#gB)" stroke="#1a1a1a" stroke-width="1"/><rect x="8.5" y="11.5" width="9.0" height="3.0" fill="url(#gB)" stroke="#1a1a1a" stroke-width="1"/><rect x="6" y="18.5" width="17.5" height="5.0" fill="url(#gB)" stroke="#1a1a1a" stroke-width="1"/><path d="M0 5.5H8" stroke="#d40000" stroke-width="1.2"/><path d="M0 14.5H9" stroke="#d40000" stroke-width="1.2"/><path d="M0 23.4H12" stroke="#d40000" stroke-width="1.2"/><path d="M1.8 6.1V13.9" stroke="#111" stroke-width=".8"/><path d="M1.8 6.1l-1.300 2.200h2.600zM1.8 13.9l-1.300 -2.200h2.600z" fill="#111"/><path d="M1.8 15.1V22.799999999999997" stroke="#111" stroke-width=".8"/><path d="M1.8 15.1l-1.300 2.200h2.600zM1.8 22.799999999999997l-1.300 -2.200h2.600z" fill="#111"/></svg>
<svg style="left:1187px;top:350px;" width="24" height="24" viewBox="0 0 24 24"><rect x="6.5" y="0.7" width="17.0" height="2.8" fill="url(#gB)" stroke="#1a1a1a" stroke-width="1"/><rect x="8.5" y="10.5" width="9.0" height="3.0" fill="url(#gB)" stroke="#1a1a1a" stroke-width="1"/><rect x="6.5" y="20.5" width="15.5" height="3.0" fill="url(#gB)" stroke="#1a1a1a" stroke-width="1"/><path d="M0 3.5H12" stroke="#d40000" stroke-width="1.2"/><path d="M0 10.5H9" stroke="#d40000" stroke-width="1.2"/><path d="M0 13.5H9" stroke="#d40000" stroke-width="1.2"/><path d="M0 20.5H8" stroke="#d40000" stroke-width="1.2"/><path d="M2 4.1V9.9" stroke="#111" stroke-width=".8"/><path d="M2 4.1l-1.300 2.200h2.600zM2 9.9l-1.300 -2.200h2.600z" fill="#111"/><path d="M2 14.1V19.9" stroke="#111" stroke-width=".8"/><path d="M2 14.1l-1.300 2.200h2.600zM2 19.9l-1.300 -2.200h2.600z" fill="#111"/></svg>
<svg style="left:1225px;top:350px;" width="24" height="24" viewBox="0 0 24 24"><path d="M0 9.6H24" stroke="#d40000" stroke-width="1.2"/><path d="M0 23.4H24" stroke="#d40000" stroke-width="1.2"/><path d="M3 10V23" stroke="#111" stroke-width=".9"/><path d="M3 23l-1.800 -3h3.600z" fill="#111"/><path d="M3 10l-1.800 3h3.600z" fill="#111"/><text x="8.3" y="9.5" font-family="DejaVu Serif,serif" font-style="italic" font-weight="bold" font-size="18" fill="#111">y</text><text x="12.8" y="23.2" font-family="DejaVu Sans,sans-serif" font-weight="bold" font-size="13.5" fill="#26344e">a</text></svg>
<span class="t" style="left:977.3px;top:387px;font-size:14px;line-height:16px;color:#3a3a3a;font-weight:bold;transform:scaleX(0.8881);transform-origin:0 0;">Rearrange</span>
<svg style="left:1035px;top:414px;" width="24" height="24" viewBox="0 0 24 24"><path d="M7 1.800L1.800 6.500 2.200 13 9.500 14 12 7.300Z M12 7.300H17.500L22.300 1.800M17.500 7.300L22.300 12.800" fill="none" stroke="#8a9ae8" stroke-width=".8"/><circle cx="7" cy="1.8" r="1.300" fill="#e4e8ff" stroke="#7d8ee6" stroke-width=".8"/><circle cx="1.8" cy="6.5" r="1.300" fill="#e4e8ff" stroke="#7d8ee6" stroke-width=".8"/><circle cx="2.2" cy="13" r="1.300" fill="#e4e8ff" stroke="#7d8ee6" stroke-width=".8"/><circle cx="9.5" cy="14" r="1.300" fill="#e4e8ff" stroke="#7d8ee6" stroke-width=".8"/><circle cx="12" cy="7.3" r="1.300" fill="#e4e8ff" stroke="#7d8ee6" stroke-width=".8"/><circle cx="17.5" cy="7.3" r="1.300" fill="#e4e8ff" stroke="#7d8ee6" stroke-width=".8"/><circle cx="22.3" cy="1.8" r="1.300" fill="#e4e8ff" stroke="#7d8ee6" stroke-width=".8"/><circle cx="22.3" cy="12.8" r="1.300" fill="#e4e8ff" stroke="#7d8ee6" stroke-width=".8"/></svg>
<svg style="left:1073px;top:414px;" width="24" height="24" viewBox="0 0 24 24"><rect x="0.5" y="1.5" width="9.5" height="10.0" fill="url(#gB)" stroke="#1a1a1a" stroke-width="1"/><rect x="12.5" y="12" width="10.0" height="10" fill="url(#gB)" stroke="#1a1a1a" stroke-width="1"/><path d="M10 5c6 0 8 1 8 6.500M12.500 18c-6 0-7.500-1-7.500-6" fill="none" stroke="#111" stroke-width="1.200"/><path d="M18 12l-2.200-3.200h4.400zM5 11.500l-2.200 3.200h4.400z" fill="#111"/></svg>
<svg style="left:1111px;top:414px;" width="24" height="24" viewBox="0 0 24 24"><rect x="1" y="1.5" width="7.5" height="8.5" fill="url(#gB)" stroke="#1a1a1a" stroke-width="1"/><rect x="14" y="8" width="8.5" height="9" fill="url(#gB)" stroke="#1a1a1a" stroke-width="1"/><path d="M8.500 4.500c7 0 9.500.5 9.500 3.500M14 13c-6 0-8-.5-8-3" fill="none" stroke="#111" stroke-width="1.100"/><path d="M18 9l-1.800-2.600h3.600zM6 9.500l-1.800 2.600h3.600z" fill="#111"/><path d="M.5 18.500H11M3 22.500H13" stroke="#111" stroke-width="1.400"/><path d="M5.500 16.500v6M9 16.500v6M5.500 19.500h3.500" stroke="#d40000" stroke-width="1.300"/></svg>
<svg style="left:1149px;top:414px;" width="24" height="24" viewBox="0 0 24 24"><rect x="1" y="1.5" width="7.5" height="8.5" fill="url(#gB)" stroke="#1a1a1a" stroke-width="1"/><rect x="14" y="8" width="8.5" height="9" fill="url(#gB)" stroke="#1a1a1a" stroke-width="1"/><path d="M8.500 4.500c7 0 9.500.5 9.500 3.500M14 13c-6 0-8-.5-8-3" fill="none" stroke="#111" stroke-width="1.100"/><path d="M18 9l-1.800-2.600h3.600zM6 9.500l-1.800 2.600h3.600z" fill="#111"/><circle cx="7" cy="18" r="4.500" fill="none" stroke="#d40000" stroke-width="1.200" stroke-dasharray="1.500 1.200"/><path d="M2.500 22.500l.3-3.500 3 2z" fill="#d40000"/></svg>
<svg style="left:1187px;top:414px;" width="24" height="24" viewBox="0 0 24 24"><rect x="0.5" y="3.5" width="6.0" height="5.0" fill="url(#gY)" stroke="#1a1a1a" stroke-width=".9"/><rect x="13.5" y="1" width="6.0" height="5" fill="url(#gY)" stroke="#1a1a1a" stroke-width=".9"/><rect x="18.5" y="7.5" width="6.0" height="5.0" fill="url(#gY)" stroke="#1a1a1a" stroke-width=".9"/><rect x="10.5" y="11.5" width="6.0" height="5.0" fill="url(#gY)" stroke="#1a1a1a" stroke-width=".9"/><rect x="0.5" y="19" width="6.0" height="5" fill="url(#gY)" stroke="#1a1a1a" stroke-width=".9"/><rect x="11" y="18.5" width="6" height="5.0" fill="url(#gY)" stroke="#1a1a1a" stroke-width=".9"/></svg>
<svg style="left:1225px;top:414px;" width="24" height="24" viewBox="0 0 24 24"><path d="M10 10L18 5M10 14.500L18 21M21 9.500V19.500" stroke="#d40000" stroke-width="1"/><rect x="0.5" y="8.5" width="9.5" height="7.5" fill="url(#gY)" stroke="#1a1a1a" stroke-width=".9"/><rect x="18" y="2.5" width="5.5" height="7.0" fill="url(#gY)" stroke="#1a1a1a" stroke-width=".9"/><rect x="18" y="19" width="5.5" height="4.5" fill="url(#gY)" stroke="#1a1a1a" stroke-width=".9"/></svg>
<span class="t" style="left:977.6px;top:451px;font-size:14px;line-height:16px;color:#3a3a3a;font-weight:bold;transform:scaleX(0.8729);transform-origin:0 0;">Remove overlaps</span>
<span class="t" style="left:1064.2px;top:482px;font-size:14px;line-height:16px;color:#3a3a3a;transform:scaleX(0.8071);transform-origin:0 0;">H:</span>
<div style="left:1079.5px;top:475.5px;width:58px;height:28px;background:#ffffff;border:1px solid #cdcdcd;border-radius:3px;"></div>
<span class="t" style="left:1087.2px;top:482px;font-size:14px;line-height:16px;color:#3a3a3a;transform:scaleX(0.8424);transform-origin:0 0;">0,0</span>
<svg style="left:1123px;top:477px;" width="11" height="24" viewBox="0 0 11 24"><path d="M1.500 7L5.300 3.200 9.100 7M1.500 17L5.300 20.800 9.100 17" fill="none" stroke="#3c3c3c" stroke-width="1.300"/></svg>
<span class="t" style="left:1142.2px;top:482px;font-size:14px;line-height:16px;color:#3a3a3a;transform:scaleX(0.8000);transform-origin:0 0;">V:</span>
<div style="left:1155.5px;top:475.5px;width:58px;height:28px;background:#ffffff;border:1px solid #cdcdcd;border-radius:3px;"></div>
<span class="t" style="left:1163.3px;top:482px;font-size:14px;line-height:16px;color:#3a3a3a;transform:scaleX(0.8424);transform-origin:0 0;">0,0</span>
<svg style="left:1199px;top:477px;" width="11" height="24" viewBox="0 0 11 24"><path d="M1.500 7L5.300 3.200 9.100 7M1.500 17L5.300 20.800 9.100 17" fill="none" stroke="#3c3c3c" stroke-width="1.300"/></svg>
<svg style="left:1225px;top:478px;" width="25" height="24" viewBox="0 0 25 24"><rect x="0.5" y="0.5" width="6.0" height="23.0" fill="url(#gB)" stroke="#1a1a1a" stroke-width="1"/><rect x="0.5" y="0.5" width="6.0" height="6.0" fill="url(#gB)" stroke="#1a1a1a" stroke-width="1"/><rect x="8.5" y="0.5" width="8.5" height="23.0" fill="url(#gB)" stroke="#1a1a1a" stroke-width="1"/><rect x="19.5" y="0.5" width="4.0" height="23.0" fill="url(#gB)" stroke="#1a1a1a" stroke-width="1"/></svg>
<div style="left:1110.5px;top:516px;width:2px;height:2px;background:#c6c6c6;"></div>
<div style="left:1114.5px;top:516px;width:2px;height:2px;background:#c6c6c6;"></div>
<div style="left:1118.5px;top:516px;width:2px;height:2px;background:#c6c6c6;"></div>
<svg style="left:969px;top:526px;" width="17" height="16" viewBox="0 0 17 16"><path d="M.7 .7H14L3 15.300H.7Z" fill="#fff" stroke="#111" stroke-width="1.300"/><path d="M15.500 1.500l1 1.500-5.500 7.500-7 5-2-.2 1.500-3.500 6-5z" fill="#111"/><path d="M12.500 3.500l3-2.500 1 2-2.500 3z" fill="#f5c020"/></svg>
<span class="t" style="left:986.2px;top:525px;font-size:14px;line-height:16px;color:#3a3a3a;transform:scaleX(0.8653);transform-origin:0 0;">Fill and Stroke (Shift+Ctrl+F)</span>
<div style="left:1216px;top:528px;width:11px;height:11px;border:1px solid #8a8a8a;border-radius:2px;"></div>
<svg style="left:1216px;top:528px;" width="11" height="11" viewBox="0 0 11 11"><path d="M7.600 2.800V8.200L3.200 5.500Z" fill="#8a8a8a"/></svg>
<div style="left:1242px;top:528px;width:11px;height:11px;border:1px solid #8a8a8a;border-radius:2px;"></div>
<svg style="left:1242px;top:528px;" width="11" height="11" viewBox="0 0 11 11"><path d="M3 3L8 8M8 3L3 8" stroke="#8a8a8a" stroke-width="1.800"/></svg>
<div style="left:969px;top:547px;width:292px;height:140px;border:1px solid #e0e0e0;border-bottom:none;"></div>
<svg style="left:981px;top:560.3px;" width="12" height="11.7" viewBox="0 0 12 11.7"><defs><linearGradient id="gF" x1="0" y1="0" x2="1" y2="1"><stop offset="0" stop-color="#8fa8d0"/><stop offset="1" stop-color="#f4f7fb"/></linearGradient></defs><rect width="12" height="11.500" fill="url(#gF)"/></svg>
<span class="t" style="left:998.2px;top:558px;font-size:14px;line-height:16px;color:#3a3a3a;transform:scaleX(0.8105);transform-origin:0 0;">Fill</span>
<div style="left:1028px;top:560.5px;width:12px;height:12px;background:#f6f6f6;border:1px solid #555;border-right-color:#aaa;border-bottom-color:#aaa;"></div>
<span class="t" style="left:1045.0px;top:558px;font-size:14px;line-height:16px;color:#3a3a3a;transform:scaleX(0.9009);transform-origin:0 0;">Stroke paint</span>
<div style="left:973px;top:578px;width:284.5px;height:110px;background:#ffffff;border:1px solid #dcdcdc;"></div>
<div style="left:1119px;top:551px;width:99px;height:28px;background:#ffffff;border:1px solid #dcdcdc;border-bottom:none;"></div>
<svg style="left:1126.5px;top:559px;" width="13" height="13" viewBox="0 0 13 13"><path d="M.5 3H9" stroke="#111" stroke-width="1.400"/><path d="M8.500 .5L12.500 3 8.500 5.500Z" fill="#111"/><path d="M.5 7.200H12.500" stroke="#111" stroke-width="1.100" stroke-dasharray="1.600 1.100"/><path d="M.5 11H12.500" stroke="#111" stroke-width="1.400"/></svg>
<span class="t" style="left:1144.4px;top:558px;font-size:14px;line-height:16px;color:#3a3a3a;transform:scaleX(0.8737);transform-origin:0 0;">Stroke style</span>
<span class="t" style="left:1018.1px;top:593px;font-size:14px;line-height:16px;color:#3a3a3a;transform:scaleX(0.8797);transform-origin:0 0;">Width:</span>
<div style="left:1057.5px;top:587.5px;width:90px;height:28px;background:#ffffff;border:1px solid #cdcdcd;border-radius:3px;"></div>
<span class="t" style="left:1066.3px;top:593px;font-size:14px;line-height:16px;color:#3a3a3a;transform:scaleX(0.8307);transform-origin:0 0;">1,000</span>
<svg style="left:1133px;top:589px;" width="11" height="24" viewBox="0 0 11 24"><path d="M1.500 7L5.300 3.200 9.100 7M1.500 17L5.300 20.800 9.100 17" fill="none" stroke="#3c3c3c" stroke-width="1.300"/></svg>
<div style="left:1154.5px;top:587px;width:55px;height:29px;background:#fbfbfb;border:1px solid #d6d6d6;border-radius:3px;"></div>
<span class="t" style="left:1160.7px;top:594px;font-size:14px;line-height:16px;color:#3a3a3a;transform:scaleX(0.8457);transform-origin:0 0;">px</span>
<svg style="left:1192px;top:596.5px;" width="11" height="9" viewBox="0 0 11 9"><path d="M1.200 2L5.500 6.300 9.800 2" fill="none" stroke="#3c3c3c" stroke-width="1.400"/></svg>
<span class="t" style="left:1029.8px;top:631px;font-size:14px;line-height:16px;color:#3a3a3a;transform:scaleX(0.8000);transform-origin:0 0;">Join:</span>
<div style="left:1058.5px;top:621.5px;width:35.5px;height:37.5px;background:#cfcfcf;border:1px solid #b9b9b9;border-radius:3px;"></div>
<div style="left:1100px;top:621.5px;width:35.5px;height:37.5px;background:#fbfbfb;border:1px solid #dcdcdc;border-radius:3px;"></div>
<div style="left:1142px;top:621.5px;width:35.5px;height:37.5px;background:#fbfbfb;border:1px solid #dcdcdc;border-radius:3px;"></div>
<svg style="left:1064px;top:628px;" width="24" height="24" viewBox="0 0 24 24"><path d="M.7 24V.7H24V17H17V24Z" fill="#9db7d8"/><path d="M9.500 9.500H24M9.500 9.500V24" stroke="#fff" stroke-width="1.600" stroke-dasharray="1.600 1.600" fill="none"/><path d="M.7 24V.7H24M24 17H17V24" fill="none" stroke="#111" stroke-width="1.400"/></svg>
<svg style="left:1106px;top:628px;" width="24" height="24" viewBox="0 0 24 24"><path d="M.7 24C.7 9 9 .7 24 .7V17H17V24Z" fill="#9db7d8"/><path d="M9.500 9.500H24M9.500 9.500V24" stroke="#fff" stroke-width="1.600" stroke-dasharray="1.600 1.600" fill="none"/><path d="M.7 24C.7 9 9 .7 24 .7M24 17H17V24" fill="none" stroke="#111" stroke-width="1.400"/></svg>
<svg style="left:1148px;top:628px;" width="24" height="24" viewBox="0 0 24 24"><path d="M.7 24V13L13 .7H24V17H17V24Z" fill="#9db7d8"/><path d="M9.500 9.500H24M9.500 9.500V24" stroke="#fff" stroke-width="1.600" stroke-dasharray="1.600 1.600" fill="none"/><path d="M.7 24V13L13 .7H24M24 17H17V24" fill="none" stroke="#111" stroke-width="1.400"/></svg>
<span class="t" style="left:993.5px;top:669px;font-size:14px;line-height:16px;color:#3a3a3a;transform:scaleX(0.9331);transform-origin:0 0;">Miter limit:</span>
<div style="left:1057.5px;top:663.5px;width:76.5px;height:28px;background:#ffffff;border:1px solid #cdcdcd;border-radius:3px;"></div>
<span class="t" style="left:1066.3px;top:669px;font-size:14px;line-height:16px;color:#3a3a3a;transform:scaleX(0.8110);transform-origin:0 0;">4,00</span>
<svg style="left:1119.5px;top:665px;" width="11" height="12" viewBox="0 0 11 12"><path d="M1.500 7L5.300 3.200 9.100 7" fill="none" stroke="#3c3c3c" stroke-width="1.300"/></svg>
<div style="left:1264px;top:95px;width:14.5px;height:587px;background:#fbfbfb;border-left:1px solid #dcdcdc;border-right:1px solid #dcdcdc;"></div>
<div style="left:1268.3px;top:97px;width:5.7px;height:378px;background:#b8b8b8;border-radius:3px;"></div>
<div style="left:962px;top:383px;width:2px;height:2px;background:#c0c0c0;"></div>
<div style="left:962px;top:387px;width:2px;height:2px;background:#c0c0c0;"></div>
<div style="left:962px;top:391px;width:2px;height:2px;background:#c0c0c0;"></div>
<div style="left:1278px;top:95px;width:88px;height:587px;background:#d9d9d9;"></div>
<svg style="left:1287.5px;top:105.5px;" width="24" height="24" viewBox="0 0 24 24"><path d="M8.500 6V3.500H19.500V14.500H15.500" fill="none" stroke="#2e2e2e" stroke-width="2" stroke-linejoin="round"/><path d="M4 15.500H13M8.500 11V20" stroke="#2e2e2e" stroke-width="2.400"/></svg>
<svg style="left:1287.5px;top:141.5px;" width="24" height="24" viewBox="0 0 24 24"><path d="M4.500 17V4.500H10l1.500 2H19.500V9" fill="none" stroke="#2e2e2e" stroke-width="2"/><path d="M4 8.500H20V17.500a2 2 0 0 1-2 2H6a2 2 0 0 1-2-2Z" fill="#2e2e2e"/><rect x="9.500" y="10.500" width="9" height="10" rx="1" fill="#dcdcdc" stroke="#2e2e2e" stroke-width="1.600"/></svg>
<svg style="left:1287.5px;top:177.0px;" width="24" height="24" viewBox="0 0 24 24"><rect x="3.500" y="2.500" width="10.500" height="12" fill="none" stroke="#2e2e2e" stroke-width="2"/><path d="M15.500 9.500H21M15.500 12H21" stroke="#2e2e2e" stroke-width="1.200"/><path d="M16.300 14.500h4v3h2.500l-4.500 4.500-4.500-4.500h2.500z" fill="#2e2e2e"/></svg>
<svg style="left:1287.5px;top:212.0px;" width="24" height="24" viewBox="0 0 24 24"><path d="M7 9V4H17V9" fill="#e8e8e8" stroke="#2e2e2e" stroke-width="1.800"/><path d="M8.500 6.500H15.500" stroke="#2e2e2e" stroke-width="1"/><rect x="3.500" y="9" width="17" height="8" rx="1.800" fill="#2e2e2e"/><rect x="7" y="14.500" width="10" height="5.500" fill="#d9d9d9" stroke="#2e2e2e" stroke-width="1.600"/><circle cx="18" cy="11.500" r=".8" fill="#ddd"/></svg>
<div style="left:1289px;top:249px;width:22px;height:1px;background:#e4e4e4;"></div>
<svg style="left:1287.5px;top:261.0px;" width="24" height="24" viewBox="0 0 24 24"><path d="M8 7V4.500H19.500V19.500H8V17" fill="none" stroke="#2e2e2e" stroke-width="2" stroke-linejoin="round"/><path d="M3 12H12" stroke="#2e2e2e" stroke-width="2.200"/><path d="M11 7.800L15.500 12 11 16.200Z" fill="#2e2e2e"/></svg>
<svg style="left:1287.5px;top:296.5px;" width="24" height="24" viewBox="0 0 24 24"><path d="M15 7.500V4.500H4.500V19.500H15V16.500" fill="none" stroke="#2e2e2e" stroke-width="2.200" stroke-linejoin="round"/><path d="M9 12H17" stroke="#2e2e2e" stroke-width="2.200"/><path d="M16 7.800L20.800 12 16 16.200Z" fill="#2e2e2e"/></svg>
<div style="left:1289px;top:333px;width:22px;height:1px;background:#e4e4e4;"></div>
<svg style="left:1287.5px;top:344.5px;" width="24" height="24" viewBox="0 0 24 24"><path d="M20 16.500C19 11 14.500 8.500 9 10.500" fill="none" stroke="#2e2e2e" stroke-width="2.600"/><path d="M4 15.500L7.500 6.500 13 13.500Z" fill="#2e2e2e"/></svg>
<svg style="left:1287.5px;top:380.0px;" width="24" height="24" viewBox="0 0 24 24"><path d="M4.500 9.500C7 13.500 12 14.500 16.500 11.500" fill="none" stroke="#8c8c8c" stroke-width="2.600"/><path d="M20.500 7.500L19.500 15.500 13 10.500Z" fill="#8c8c8c"/></svg>
<div style="left:1289px;top:417px;width:22px;height:1px;background:#e4e4e4;"></div>
<svg style="left:1287.5px;top:428.0px;" width="24" height="24" viewBox="0 0 24 24"><rect x="7.800" y="3.800" width="11.800" height="14" rx="1.800" fill="none" stroke="#2e2e2e" stroke-width="1.700"/><path d="M4.300 7.800V19a2 2 0 0 0 2 2H15.800" fill="none" stroke="#2e2e2e" stroke-width="1.700"/></svg>
<svg style="left:1287.5px;top:464.0px;" width="24" height="24" viewBox="0 0 24 24"><path d="M7.500 3L15 15.500M16.500 3L9 15.500" stroke="#2e2e2e" stroke-width="2.400"/><circle cx="8" cy="18" r="2.300" fill="none" stroke="#2e2e2e" stroke-width="1.600"/><circle cx="16" cy="18" r="2.300" fill="none" stroke="#2e2e2e" stroke-width="1.600"/></svg>
<svg style="left:1287.5px;top:500.5px;" width="24" height="24" viewBox="0 0 24 24"><rect x="5" y="4.500" width="14" height="16.500" rx="2" fill="#2e2e2e"/><rect x="9" y="2.500" width="6" height="3.500" rx="1" fill="none" stroke="#2e2e2e" stroke-width="1.400"/><rect x="9.500" y="10" width="8" height="9.500" rx=".8" fill="#d9d9d9"/></svg>
<div style="left:1289px;top:537px;width:22px;height:1px;background:#e4e4e4;"></div>
<svg style="left:1287.5px;top:549.0px;" width="24" height="24" viewBox="0 0 24 24"><defs><radialGradient id="gLz" cx=".4" cy=".35" r=".75"><stop offset="0" stop-color="#ffffff"/><stop offset="1" stop-color="#c4d8ec"/></radialGradient></defs><path d="M16 15.800L19.300 19" stroke="#2e2e2e" stroke-width="2.600" stroke-linecap="round"/><circle cx="11.300" cy="10.800" r="6.900" fill="url(#gLz)" stroke="#2e2e2e" stroke-width="1.400"/><rect x="7" y="7.500" width="8.600" height="6.600" fill="#fff" stroke="#111" stroke-width="1" stroke-dasharray="1 1"/></svg>
<svg style="left:1287.5px;top:584.5px;" width="24" height="24" viewBox="0 0 24 24"><path d="M16 15.800L19.300 19" stroke="#2e2e2e" stroke-width="2.600" stroke-linecap="round"/><circle cx="11.300" cy="10.800" r="6.900" fill="url(#gLz)" stroke="#2e2e2e" stroke-width="1.400"/><rect x="7" y="6.800" width="5.200" height="5.200" fill="#f5d04a" stroke="#333" stroke-width=".9"/><rect x="10.300" y="9.800" width="5.200" height="5.200" fill="#f5d04a" stroke="#333" stroke-width=".9"/></svg>
<svg style="left:1295px;top:648px;" width="10" height="14" viewBox="0 0 10 14"><path d="M2.200 2L7.400 7 2.200 12" fill="none" stroke="#555" stroke-width="1.500"/></svg>
<svg style="left:1339px;top:648px;" width="10" height="14" viewBox="0 0 10 14"><path d="M2.200 2L7.400 7 2.200 12" fill="none" stroke="#555" stroke-width="1.500"/></svg>
<div style="left:1327.5px;top:99.5px;width:33px;height:35px;background:#cfcfcf;border:1px solid #c0c0c0;border-radius:3px;"></div>
<svg style="left:1331.6px;top:104.5px;" width="24" height="24" viewBox="0 0 24 24"><path d="M6 5.500L15 14.500" stroke="#111" stroke-width="1.300"/><path d="M16.300 15.800L10.800 14 14.500 10.300Z" fill="#111"/><rect x="-2" y="-2" width="4" height="4" transform="translate(6,6) rotate(45)" fill="#aab4ff" stroke="#1414e0" stroke-width="1.100"/><rect x="-2" y="-2" width="4" height="4" transform="translate(17.600,16.800) rotate(45)" fill="#b8d8c8" stroke="#128a12" stroke-width="1.100"/></svg>
<div style="left:1333px;top:141px;width:21px;height:1px;background:#e4e4e4;"></div>
<svg style="left:1331.6px;top:152.5px;" width="24" height="24" viewBox="0 0 24 24"><path d="M6 5.500L15 14.500" stroke="#111" stroke-width="1.300"/><path d="M16.300 15.800L10.800 14 14.500 10.300Z" fill="#111"/><rect x="-2" y="-2" width="4" height="4" transform="translate(6,6) rotate(45)" fill="#aab4ff" stroke="#1414e0" stroke-width="1.100"/><rect x="-2" y="-2" width="4" height="4" transform="translate(17.600,16.800) rotate(45)" fill="#b8d8c8" stroke="#128a12" stroke-width="1.100"/></svg>
<svg style="left:1331.6px;top:188px;" width="24" height="24" viewBox="0 0 24 24"><path d="M19 4V19.500H4.500" fill="none" stroke="#1a7a1a" stroke-width="1" stroke-dasharray="1 1.200"/></svg>
<svg style="left:1331.6px;top:224px;" width="24" height="24" viewBox="0 0 24 24"><path d="M18.300 4V19.200H3.500" fill="none" stroke="#222" stroke-width="1" stroke-dasharray="1 1.200"/><rect x="-2.1" y="-2.1" width="4.2" height="4.2" transform="translate(18.3,19.2) rotate(45)" fill="#b8d8b8" stroke="#1a7a1a" stroke-width=".9"/></svg>
<svg style="left:1331.6px;top:260px;" width="24" height="24" viewBox="0 0 24 24"><path d="M17.500 4V18H4.500" fill="none" stroke="#222" stroke-width="1" stroke-dasharray="1 1.200"/><rect x="-2.1" y="-2.1" width="4.2" height="4.2" transform="translate(17.5,8.5) rotate(45)" fill="#b8d8b8" stroke="#1a7a1a" stroke-width=".9"/></svg>
<svg style="left:1331.6px;top:296.5px;" width="24" height="24" viewBox="0 0 24 24"><path d="M18.500 4.500V18H4.500" fill="none" stroke="#222" stroke-width="1" stroke-dasharray="1 1.200"/><circle cx="8" cy="8" r="2" fill="#b8d8b8" stroke="#1a7a1a" stroke-width=".9"/></svg>
<div style="left:1333px;top:333px;width:21px;height:1px;background:#e4e4e4;"></div>
<div style="left:1327.5px;top:339.5px;width:33px;height:35px;background:#cfcfcf;border:1px solid #c0c0c0;border-radius:3px;"></div>
<svg style="left:1331.6px;top:344.5px;" width="24" height="24" viewBox="0 0 24 24"><path d="M6 5.500L15 14.500" stroke="#111" stroke-width="1.300"/><path d="M16.300 15.800L10.800 14 14.500 10.300Z" fill="#111"/><rect x="-2" y="-2" width="4" height="4" transform="translate(6,6) rotate(45)" fill="#aab4ff" stroke="#1414e0" stroke-width="1.100"/><rect x="-2" y="-2" width="4" height="4" transform="translate(17.600,16.800) rotate(45)" fill="#b8d8c8" stroke="#128a12" stroke-width="1.100"/></svg>
<svg style="left:1331.6px;top:380px;" width="24" height="24" viewBox="0 0 24 24"><path d="M3.500 3.500C12 5 15.500 11 12.500 17.500 16 19 19.500 16.500 20.500 12.500" fill="none" stroke="#128a12" stroke-width="1.400"/></svg>
<svg style="left:1331.6px;top:416px;" width="24" height="24" viewBox="0 0 24 24"><path d="M3.500 19.500L20.500 4M4.500 8.500L19.500 15" stroke="#333" stroke-width=".9"/><circle cx="12" cy="11.800" r="2.200" fill="#4ab04a" stroke="#126a12" stroke-width=".9"/></svg>
<svg style="left:1331.6px;top:451.5px;" width="24" height="24" viewBox="0 0 24 24"><path d="M3.500 3.500C11 5 15 10 14 16 17 15 19.500 12.500 20 9" fill="none" stroke="#444" stroke-width=".9"/><rect x="-2.1" y="-2.1" width="4.2" height="4.2" transform="translate(11.5,17) rotate(45)" fill="#b8d8b8" stroke="#1a7a1a" stroke-width=".9"/></svg>
<svg style="left:1331.6px;top:486.5px;" width="24" height="24" viewBox="0 0 24 24"><path d="M4 5.500C9 5 12.500 7 13 11 14 16 17 17 20.500 13" fill="none" stroke="#444" stroke-width=".9"/><rect x="10" y="5.500" width="4.400" height="4.400" fill="#b8d8b8" stroke="#1a7a1a" stroke-width=".9"/></svg>
<svg style="left:1331.6px;top:525.5px;" width="24" height="24" viewBox="0 0 24 24"><path d="M4 19.500L20.500 5.500" stroke="#c01818" stroke-width="1.100"/><path d="M6.500 20.500L9.500 13M9 19L12 11.500M14.500 13.500L17.500 6M17 12L20 4.500" stroke="#c01818" stroke-width="1.300"/><circle cx="12" cy="12.500" r="2" fill="#6ac06a" stroke="#126a12" stroke-width=".9"/></svg>
<div style="left:1333px;top:561px;width:21px;height:1px;background:#e4e4e4;"></div>
<div style="left:1327.5px;top:567.5px;width:33px;height:35px;background:#cfcfcf;border:1px solid #c0c0c0;border-radius:3px;"></div>
<svg style="left:1331.6px;top:573px;" width="24" height="24" viewBox="0 0 24 24"><path d="M6 5.500L15 14.500" stroke="#111" stroke-width="1.300"/><path d="M16.300 15.800L10.800 14 14.500 10.300Z" fill="#111"/><rect x="-2" y="-2" width="4" height="4" transform="translate(6,6) rotate(45)" fill="#aab4ff" stroke="#1414e0" stroke-width="1.100"/><rect x="-2" y="-2" width="4" height="4" transform="translate(17.600,16.800) rotate(45)" fill="#b8d8c8" stroke="#128a12" stroke-width="1.100"/></svg>
<svg style="left:1331.6px;top:607px;" width="24" height="24" viewBox="0 0 24 24"><path d="M19 4.500V18.500H5" fill="none" stroke="#333" stroke-width="1.100"/><circle cx="9.500" cy="9.500" r="2" fill="#b8d8b8" stroke="#1a7a1a" stroke-width=".9"/></svg>
<div style="left:0px;top:682px;width:1366px;height:1px;background:#e6e6e6;"></div>
<div style="left:0px;top:683px;width:1366px;height:31px;background:#f0f0f0;"></div>
<div style="left:0;top:683px;width:1353px;height:16px;overflow:hidden;background:#fff"><div style="left:17px;top:0;width:16px;height:16px;background:#000000"></div><div style="left:33px;top:0;width:16px;height:16px;background:#1a1a1a"></div><div style="left:49px;top:0;width:16px;height:16px;background:#333333"></div><div style="left:65px;top:0;width:16px;height:16px;background:#4d4d4d"></div><div style="left:81px;top:0;width:16px;height:16px;background:#666666"></div><div style="left:97px;top:0;width:16px;height:16px;background:#808080"></div><div style="left:113px;top:0;width:16px;height:16px;background:#999999"></div><div style="left:129px;top:0;width:16px;height:16px;background:#b3b3b3"></div><div style="left:145px;top:0;width:16px;height:16px;background:#cccccc"></div><div style="left:161px;top:0;width:16px;height:16px;background:#e6e6e6"></div><div style="left:177px;top:0;width:16px;height:16px;background:#ececec"></div><div style="left:193px;top:0;width:16px;height:16px;background:#f2f2f2"></div><div style="left:209px;top:0;width:16px;height:16px;background:#f9f9f9"></div><div style="left:225px;top:0;width:16px;height:16px;background:#ffffff"></div><div style="left:241px;top:0;width:16px;height:16px;background:#800000"></div><div style="left:257px;top:0;width:16px;height:16px;background:#ff0000"></div><div style="left:273px;top:0;width:16px;height:16px;background:#808000"></div><div style="left:289px;top:0;width:16px;height:16px;background:#ffff00"></div><div style="left:305px;top:0;width:16px;height:16px;background:#008000"></div><div style="left:321px;top:0;width:16px;height:16px;background:#00ff00"></div><div style="left:337px;top:0;width:16px;height:16px;background:#008080"></div><div style="left:353px;top:0;width:16px;height:16px;background:#00ffff"></div><div style="left:369px;top:0;width:16px;height:16px;background:#000080"></div><div style="left:385px;top:0;width:16px;height:16px;background:#0000ff"></div><div style="left:401px;top:0;width:16px;height:16px;background:#800080"></div><div style="left:417px;top:0;width:16px;height:16px;background:#ff00ff"></div><div style="left:433px;top:0;width:16px;height:16px;background:#2b0000"></div><div style="left:449px;top:0;width:16px;height:16px;background:#550000"></div><div style="left:465px;top:0;width:16px;height:16px;background:#800000"></div><div style="left:481px;top:0;width:16px;height:16px;background:#aa0000"></div><div style="left:497px;top:0;width:16px;height:16px;background:#d40000"></div><div style="left:513px;top:0;width:16px;height:16px;background:#ff0000"></div><div style="left:529px;top:0;width:16px;height:16px;background:#ff2a2a"></div><div style="left:545px;top:0;width:16px;height:16px;background:#ff5555"></div><div style="left:561px;top:0;width:16px;height:16px;background:#ff8080"></div><div style="left:577px;top:0;width:16px;height:16px;background:#ffaaaa"></div><div style="left:593px;top:0;width:16px;height:16px;background:#ffd5d5"></div><div style="left:609px;top:0;width:16px;height:16px;background:#280b0b"></div><div style="left:625px;top:0;width:16px;height:16px;background:#501616"></div><div style="left:641px;top:0;width:16px;height:16px;background:#782121"></div><div style="left:657px;top:0;width:16px;height:16px;background:#a02c2c"></div><div style="left:673px;top:0;width:16px;height:16px;background:#c83737"></div><div style="left:689px;top:0;width:16px;height:16px;background:#d35f5f"></div><div style="left:705px;top:0;width:16px;height:16px;background:#de8787"></div><div style="left:721px;top:0;width:16px;height:16px;background:#e9afaf"></div><div style="left:737px;top:0;width:16px;height:16px;background:#f4d7d7"></div><div style="left:753px;top:0;width:16px;height:16px;background:#241c1c"></div><div style="left:769px;top:0;width:16px;height:16px;background:#483737"></div><div style="left:785px;top:0;width:16px;height:16px;background:#6c5353"></div><div style="left:801px;top:0;width:16px;height:16px;background:#916f6f"></div><div style="left:817px;top:0;width:16px;height:16px;background:#ac9393"></div><div style="left:833px;top:0;width:16px;height:16px;background:#c8b7b7"></div><div style="left:849px;top:0;width:16px;height:16px;background:#e3dbdb"></div><div style="left:865px;top:0;width:16px;height:16px;background:#2b1100"></div><div style="left:881px;top:0;width:16px;height:16px;background:#552200"></div><div style="left:897px;top:0;width:16px;height:16px;background:#803300"></div><div style="left:913px;top:0;width:16px;height:16px;background:#aa4400"></div><div style="left:929px;top:0;width:16px;height:16px;background:#d45500"></div><div style="left:945px;top:0;width:16px;height:16px;background:#ff6600"></div><div style="left:961px;top:0;width:16px;height:16px;background:#ff7f2a"></div><div style="left:977px;top:0;width:16px;height:16px;background:#ff9955"></div><div style="left:993px;top:0;width:16px;height:16px;background:#ffb380"></div><div style="left:1009px;top:0;width:16px;height:16px;background:#ffccaa"></div><div style="left:1025px;top:0;width:16px;height:16px;background:#ffe6d5"></div><div style="left:1041px;top:0;width:16px;height:16px;background:#28170b"></div><div style="left:1057px;top:0;width:16px;height:16px;background:#502d16"></div><div style="left:1073px;top:0;width:16px;height:16px;background:#784421"></div><div style="left:1089px;top:0;width:16px;height:16px;background:#a05a2c"></div><div style="left:1105px;top:0;width:16px;height:16px;background:#c87137"></div><div style="left:1121px;top:0;width:16px;height:16px;background:#d38d5f"></div><div style="left:1137px;top:0;width:16px;height:16px;background:#deaa87"></div><div style="left:1153px;top:0;width:16px;height:16px;background:#e9c6af"></div><div style="left:1169px;top:0;width:16px;height:16px;background:#f4e3d7"></div><div style="left:1185px;top:0;width:16px;height:16px;background:#241f1c"></div><div style="left:1201px;top:0;width:16px;height:16px;background:#483e37"></div><div style="left:1217px;top:0;width:16px;height:16px;background:#6c5d53"></div><div style="left:1233px;top:0;width:16px;height:16px;background:#917c6f"></div><div style="left:1249px;top:0;width:16px;height:16px;background:#ac9d93"></div><div style="left:1265px;top:0;width:16px;height:16px;background:#c8beb7"></div><div style="left:1281px;top:0;width:16px;height:16px;background:#e3dedb"></div><div style="left:1297px;top:0;width:16px;height:16px;background:#2b2200"></div><div style="left:1313px;top:0;width:16px;height:16px;background:#554400"></div><div style="left:1329px;top:0;width:16px;height:16px;background:#806600"></div><div style="left:1345px;top:0;width:16px;height:16px;background:#aa8800"></div></div>
<svg style="left:0px;top:683px;" width="17" height="16" viewBox="0 0 17 16"><rect width="17" height="16" fill="#fff"/><path d="M1.500 1L15.500 15M15.500 1L1.500 15" stroke="#7a0c0c" stroke-width="1.500"/></svg>
<svg style="left:1355px;top:683px;" width="11" height="12" viewBox="0 0 11 12"><path d="M8 1.500L3 5.700 8 10" fill="none" stroke="#3c3c3c" stroke-width="1.400"/></svg>
<div style="left:0px;top:699px;width:1353px;height:15px;background:#fbfbfb;border-top:1px solid #e4e4e4;"></div>
<div style="left:2px;top:705.5px;width:260px;height:5.5px;background:#bcbcbc;border-radius:3px;"></div>
<div style="left:0px;top:714px;width:1366px;height:30px;background:#f0f0f0;"></div>
<span class="t" style="left:2.3px;top:717px;font-size:11px;line-height:12px;color:#454545;transform:scaleX(0.9352);transform-origin:0 0;">Fill:</span>
<span class="t" style="left:2.3px;top:731px;font-size:11px;line-height:12px;color:#454545;transform:scaleX(0.9299);transform-origin:0 0;">Stroke:</span>
<span class="t" style="left:66.3px;top:717px;font-size:11px;line-height:12px;color:#454545;font-weight:bold;transform:scaleX(0.9718);transform-origin:0 0;">Unset</span>
<div style="left:39px;top:730.5px;width:75px;height:13.5px;background:#000000;"></div>
<span class="t" style="left:117.3px;top:731px;font-size:11px;line-height:12px;color:#454545;">1</span>
<span class="t" style="left:127.7px;top:723px;font-size:11.5px;line-height:12px;color:#454545;transform:scaleX(0.8000);transform-origin:0 0;">O:</span>
<div style="left:140.5px;top:717.5px;width:46px;height:24.5px;background:#ffffff;border:1px solid #cdcdcd;border-radius:3px;overflow:hidden;"><span class="t" style="left:7px;top:4.200px;font-size:11.500px;line-height:14px;color:#454545;width:15.500px;overflow:hidden;">100</span></div>
<svg style="left:173.5px;top:719px;" width="10" height="22" viewBox="0 0 10 22"><path d="M1.400 5.800L5 2.200 8.600 5.800M1.400 15.500L5 19.100 8.600 15.500" fill="none" stroke="#3c3c3c" stroke-width="1.200"/></svg>
<div style="left:190px;top:717px;width:1px;height:26px;background:#d8d8d8;"></div>
<svg style="left:196px;top:723px;" width="14" height="13" viewBox="0 0 14 13"><path d="M1 5.500C4 9.500 10 9.500 13 5.500" fill="none" stroke="#222" stroke-width="1.300"/><path d="M2 4L4 7.500M4.500 2.500L5.800 8M7 2V8.300M9.500 2.500L8.200 8M12 4L10 7.500M3 10.500L4.500 8M7 11V8.500M11 10.500L9.500 8" stroke="#222" stroke-width=".9"/></svg>
<svg style="left:220px;top:722px;" width="11" height="15" viewBox="0 0 11 15"><path d="M3 6V4.200a2.400 2.400 0 0 1 4.800 0V5" fill="none" stroke="#222" stroke-width="1.200"/><rect x="1.500" y="6.200" width="7.500" height="6.800" fill="#fbfbfb" stroke="#222" stroke-width="1" stroke-dasharray="1.500 1"/><path d="M4 8.500h2.500v2.500H4z" fill="#caa" stroke="#644" stroke-width=".5"/></svg>
<div style="left:237px;top:716.5px;width:65.5px;height:26.5px;background:#fbfbfb;border:1px solid #d6d6d6;border-radius:3px;"></div>
<span class="t" style="left:248.8px;top:724px;font-size:11px;line-height:12px;color:#454545;transform:scaleX(0.9779);transform-origin:0 0;">(root)</span>
<svg style="left:285px;top:724.5px;" width="11" height="9" viewBox="0 0 11 9"><path d="M1.200 2L5.500 6.300 9.800 2" fill="none" stroke="#3c3c3c" stroke-width="1.400"/></svg>
<span class="t" style="left:308.9px;top:722px;font-size:13.5px;line-height:15px;color:#454545;font-weight:bold;transform:scaleX(0.9919);transform-origin:0 0;">Image</span>
<span class="t" style="left:351.5px;top:722px;font-size:13.5px;line-height:15px;color:#454545;transform:scaleX(0.9250);transform-origin:0 0;">200 × 179: embedded in root. Click selection to toggle scale/rotation handles.</span>
<div style="left:1215px;top:716px;width:1px;height:28px;background:#d8d8d8;"></div>
<span class="t" style="left:1218.2px;top:717px;font-size:10px;line-height:11px;color:#3a3a3a;font-family:'DejaVu Sans Mono','Liberation Mono',monospace;transform:scaleX(0.8000);transform-origin:0 0;">X:</span>
<span class="t" style="left:1235.4px;top:717px;font-size:10px;line-height:11px;color:#3a3a3a;font-family:'DejaVu Sans Mono','Liberation Mono',monospace;transform:scaleX(0.9799);transform-origin:0 0;">493,12</span>
<span class="t" style="left:1218.2px;top:731px;font-size:10px;line-height:11px;color:#3a3a3a;font-family:'DejaVu Sans Mono','Liberation Mono',monospace;transform:scaleX(0.8000);transform-origin:0 0;">Y:</span>
<span class="t" style="left:1235.4px;top:731px;font-size:10px;line-height:11px;color:#3a3a3a;font-family:'DejaVu Sans Mono','Liberation Mono',monospace;transform:scaleX(0.9799);transform-origin:0 0;">460,83</span>
<span class="t" style="left:1279.2px;top:724px;font-size:11px;line-height:12px;color:#454545;transform:scaleX(0.8383);transform-origin:0 0;">Z:</span>
<div style="left:1290.5px;top:717.5px;width:55px;height:25px;background:#ffffff;border:1px solid #cdcdcd;border-radius:3px;"></div>
<span class="t" style="left:1304.0px;top:725px;font-size:10px;line-height:11px;color:#3a3a3a;font-family:'DejaVu Sans Mono','Liberation Mono',monospace;transform:scaleX(1.0796);transform-origin:0 0;">68%</span>
<svg style="left:1332.5px;top:719px;" width="10" height="22" viewBox="0 0 10 22"><path d="M1.400 5.300L5 1.700 8.600 5.300M1.400 15.500L5 19.100 8.600 15.500" fill="none" stroke="#3c3c3c" stroke-width="1.200"/></svg>
<div style="left:0px;top:744px;width:1366px;height:24px;background:#2e2e2e;"></div>
<svg style="left:6px;top:746px;" width="22" height="20" viewBox="0 0 22 20"><path d="M1 1H14.500C18.500 1 21 3.500 21 7.500V12.500C21 16.500 18.500 19 14.500 19H8C4 19 1.500 16.500 1.500 12.500Z" fill="#8fc05a" stroke="#eef6e6" stroke-width="1.400" stroke-linejoin="round"/><path d="M5.500 5V12C5.500 14 6.800 15.200 8.800 15.200H14C16 15.200 17.300 14 17.300 12V8.500C17.300 6.200 14 6.200 14 8.500V12M11.300 12V8.500C11.300 6.200 8.200 6.200 8.200 8.200" fill="none" stroke="#fff" stroke-width="1.600" stroke-linecap="round"/></svg>
<span class="t" style="left:33.5px;top:748px;font-size:14px;line-height:16px;color:#dcdcdc;transform:scaleX(0.8967);transform-origin:0 0;">Menu</span>
<svg style="left:77px;top:748px;" width="17" height="16" viewBox="0 0 17 16"><rect x=".5" y=".5" width="16" height="4" fill="#d8d8d8" stroke="#555" stroke-width=".6"/><rect x=".5" y="4.500" width="16" height="10.500" fill="#7fb04a"/><rect x="3" y="5.500" width="11" height="1.600" fill="#2e2e2e"/><rect x="1.500" y="13" width="14" height="2" fill="#5f8a36"/></svg>
<svg style="left:109px;top:745.5px;" width="23" height="21" viewBox="0 0 23 21"><path d="M.5 3.500L9 .5H12L13.500 3.500H22.500V20.500H.5Z" fill="#a88a54"/><path d="M.5 4.500H22.500V20.500H.5Z" fill="#c8aa6e"/><path d="M.5 4.500H22.500V6H.5Z" fill="#dcc28a"/></svg>
<svg style="left:134px;top:745.5px;" width="21" height="21" viewBox="0 0 21 21"><rect x=".5" y=".5" width="20" height="20" rx="3" fill="#141414" stroke="#3a3a3a" stroke-width=".8"/><text x="3" y="9.500" font-family="Liberation Mono,monospace" font-weight="bold" font-size="7.500" fill="#e8e8e8">$_</text></svg>
<svg style="left:157px;top:745.5px;" width="23" height="21" viewBox="0 0 23 21"><rect x=".5" y=".5" width="22" height="20" rx="4" fill="#f08a3c"/><circle cx="11.500" cy="10.500" r="6.500" fill="#fff"/><circle cx="12.500" cy="9.500" r="4" fill="#f08a3c"/><path d="M5.500 8C7 6 9 6.500 10 8S9 11 7.500 10.500Z" fill="#f08a3c"/><path d="M12 8.500a2.300 2.300 0 1 1-2 3.500" fill="none" stroke="#fff" stroke-width="1.600"/></svg>
<svg style="left:199px;top:747.5px;" width="17" height="17" viewBox="0 0 17 17"><rect x=".5" y=".5" width="16" height="16" rx="3" fill="#8e5a3c"/><circle cx="8.500" cy="8.500" r="5" fill="#b8a498"/><circle cx="9.300" cy="7.700" r="3" fill="#8e5a3c"/><path d="M8.500 7a1.800 1.800 0 1 1-1.500 2.800" fill="none" stroke="#b8a498" stroke-width="1.200"/></svg>
<span class="t" style="left:223.2px;top:748px;font-size:14px;line-height:16px;color:#dcdcdc;transform:scaleX(0.9009);transform-origin:0 0;">[Mozilla Firefox]</span>
<svg style="left:356px;top:747.5px;" width="17" height="17" viewBox="0 0 17 17"><rect x=".5" y=".5" width="16" height="16" rx="3" fill="#8e5a3c"/><circle cx="8.500" cy="8.500" r="5" fill="#b8a498"/><circle cx="9.300" cy="7.700" r="3" fill="#8e5a3c"/><path d="M8.500 7a1.800 1.800 0 1 1-1.500 2.800" fill="none" stroke="#b8a498" stroke-width="1.200"/></svg>
<span class="t" style="left:380.3px;top:748px;font-size:14px;line-height:16px;color:#dcdcdc;transform:scaleX(0.8833);transform-origin:0 0;">[Obijuan Academy ...</span>
<svg style="left:514px;top:748px;" width="15" height="16" viewBox="0 0 15 16"><path d="M.5 2.500H6L7.500 4H14.500V15.500H.5Z" fill="#5f6a50"/><path d="M.5 5H14.500V15.500H.5Z" fill="#7a8a62"/><path d="M6 8h3v3h2l-3.500 3.500L4 11h2z" fill="#3a4030"/></svg>
<span class="t" style="left:537.3px;top:748px;font-size:14px;line-height:16px;color:#dcdcdc;transform:scaleX(0.8996);transform-origin:0 0;">[Descargas]</span>
<svg style="left:669.5px;top:748px;" width="17" height="16" viewBox="0 0 17 16"><rect x=".5" y=".5" width="16" height="15" rx="2.500" fill="#5a5a5a"/><path d="M8.500 2.500L14 8.300C12.500 9 12 9.500 13 10.500 11.500 12 9.500 11 8.500 12.500 7.500 11 5.500 12 4 10.500 5 9.500 4.500 9 3 8.300Z" fill="#1e1e1e"/><path d="M6 13.500C7.500 12.800 9.500 12.800 11 13.500" stroke="#1e1e1e" stroke-width="1" fill="none"/><path d="M7.300 5.500L8.500 4.200 9.700 5.500 9 6.500H8Z" fill="#5a5a5a"/></svg>
<span class="t" style="left:694.5px;top:748px;font-size:14px;line-height:16px;color:#dcdcdc;transform:scaleX(0.8996);transform-origin:0 0;">[*Titorial.svg - Inks...</span>
<svg style="left:828px;top:748px;" width="15" height="16" viewBox="0 0 15 16"><path d="M.5 2.500L5 .8H7L8 2.500H14.500V15.500H.5Z" fill="#d8e8c4"/><path d="M.5 4H14.500V15.500H.5Z" fill="#8ab85a"/><path d="M.5 4H14.500V5.200H.5Z" fill="#a8cc80"/></svg>
<span class="t" style="left:851.4px;top:748px;font-size:14px;line-height:16px;color:#dcdcdc;transform:scaleX(0.8829);transform-origin:0 0;">Obijuan</span>
<div style="left:975px;top:744px;width:157px;height:24px;background:#9ab87c;"></div>
<svg style="left:984px;top:748px;" width="17" height="16" viewBox="0 0 17 16"><rect x=".5" y=".5" width="16" height="15" rx="2.500" fill="#d4d4d4"/><path d="M8.500 2.500L14 8.300C12.500 9 12 9.500 13 10.500 11.500 12 9.500 11 8.500 12.500 7.500 11 5.500 12 4 10.500 5 9.500 4.500 9 3 8.300Z" fill="#222"/><path d="M6 13.500C7.500 12.800 9.500 12.800 11 13.500" stroke="#222" stroke-width="1" fill="none"/><path d="M7.300 5.500L8.500 4.200 9.700 5.500 9 6.500H8Z" fill="#d4d4d4"/></svg>
<span class="t" style="left:1008.4px;top:748px;font-size:14px;line-height:16px;color:#f6f6f6;transform:scaleX(0.8996);transform-origin:0 0;">*Titorial.svg - Inks...</span>
<svg style="left:1145.5px;top:746px;" width="19" height="21" viewBox="0 0 19 21"><path d="M9.500 .8C12 2.500 15 3.200 18.300 3.200 18.300 11 15.500 17 9.500 20.200 3.500 17 .7 11 .7 3.200 4 3.200 7 2.500 9.500 .8Z" fill="#f2f2f2" stroke="#c8c8c8" stroke-width=".6"/><circle cx="9.500" cy="9" r="5" fill="#3a78c8"/><text x="8" y="12.500" font-family="Liberation Serif,serif" font-weight="bold" font-size="9" fill="#fff">i</text></svg>
<svg style="left:1172px;top:748px;" width="16" height="16" viewBox="0 0 16 16"><rect x=".5" y="11" width="3" height="4.500" rx=".6" fill="#a0a0a0"/><rect x="4.500" y="8" width="3" height="7.500" rx=".6" fill="#a0a0a0"/><rect x="8.500" y="4.500" width="3" height="11" rx=".6" fill="#a0a0a0"/><rect x="12.500" y=".5" width="3" height="15" rx=".6" fill="#a0a0a0"/></svg>
<svg style="left:1195px;top:748px;" width="18" height="16" viewBox="0 0 18 16"><path d="M.5 5.500H4L8.500 1.500V14.500L4 10.500H.5Z" fill="#a0a0a0"/><path d="M10.500 5C12 6.500 12 9.500 10.500 11" fill="none" stroke="#a0a0a0" stroke-width="1.500"/><path d="M12.800 2.500C15.800 5.500 15.800 10.500 12.800 13.500" fill="none" stroke="#8a8a8a" stroke-width="1.500"/></svg>
<svg style="left:1220px;top:749px;" width="20" height="14" viewBox="0 0 20 14"><rect x=".8" y=".8" width="16" height="12" rx="2" fill="#1a1a1a" stroke="#050505" stroke-width="1.600"/><rect x="17.500" y="4" width="2" height="5.500" fill="#050505"/><rect x="3" y="3.200" width="11.500" height="7.200" fill="#8a8a8a"/><path d="M4 8.500L9 5.500 8.500 7.500 13.500 5 9 8.800 9.300 7Z" fill="#1a1a1a"/></svg>
<span class="t" style="left:1247.4px;top:748px;font-size:14px;line-height:16px;color:#dcdcdc;transform:scaleX(0.9751);transform-origin:0 0;">mié</span>
<span class="t" style="left:1276.0px;top:748px;font-size:14px;line-height:16px;color:#dcdcdc;transform:scaleX(0.8716);transform-origin:0 0;">1 de mar, 21:52</span>
</body></html>
